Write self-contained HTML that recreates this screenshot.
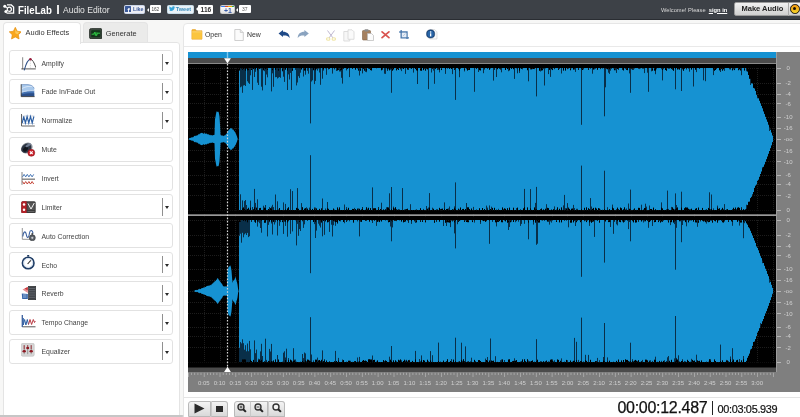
<!DOCTYPE html>
<html lang="en"><head><meta charset="utf-8"><title>FileLab | Audio Editor</title>
<style>
*{box-sizing:border-box;margin:0;padding:0}
html,body{width:800px;height:417px;overflow:hidden}
body{background:#f7f7f6;font-family:"Liberation Sans",Arial,sans-serif;position:relative;color:#333}
.abs{position:absolute}
#hdr{left:0;top:0;width:800px;height:19.500px;background:#3d4147;border-bottom:1.200px solid #2a2d32}
#hdr .logo{left:17.5px;top:2.5px;font-size:11.3px;font-weight:bold;color:#fff;line-height:14px;transform:scaleX(.855);transform-origin:0 0}
#hdr .sep{left:57.2px;top:5px;width:1.4px;height:9px;background:#e8e8e8}
#hdr .ttl{left:63px;top:3.5px;font-size:8.55px;color:#e6e6e6;line-height:12px}
.soc{top:4.5px;height:9.2px;border-radius:1.5px;font-size:6px;line-height:9px;font-weight:bold;text-align:center;white-space:nowrap}
.cnt{background:#fff;color:#555;border-radius:1px}
.st{line-height:9px;white-space:nowrap}
.cnt:before{content:"";position:absolute;left:-2.5px;top:2.5px;border:2px solid transparent;border-right-color:#fff;border-left:0}
#welcome{left:661px;top:5.5px;font-size:5.75px;color:#d9d9d9;line-height:9px;white-space:nowrap}
#welcome b{color:#fff;text-decoration:underline;margin-left:1.500px}
#make{left:733.5px;top:1.8px;width:67.5px;height:14.7px;border-radius:2px 0 0 2px;background:linear-gradient(#f1f1f1,#cfcfcf);border:1px solid #9a9a9a;font-size:7.5px;font-weight:bold;color:#222;line-height:12.5px;padding-left:7px;white-space:nowrap}
#make i{position:absolute;left:53px;top:0;width:1px;height:13px;background:#aaa}
#make u{position:absolute;left:55.500px;top:1.500px;width:9.600px;height:9.600px;border-radius:50%;background:linear-gradient(#f39a12,#f6d428);border:1.500px solid #171005}
#make u:after{content:"";position:absolute;left:1.800px;top:1.800px;width:3px;height:3px;border-radius:50%;background:#1a1208}
/* left panel */
#tab1{left:2.5px;top:22px;width:78px;height:22px;background:#fff;border:1px solid #e4e4e4;border-bottom:0;border-radius:4px 4px 0 0;z-index:2}
#tab2{left:82.5px;top:22px;width:65.5px;height:20.5px;background:#ebebea;border:1px solid #e4e4e4;border-bottom:0;border-radius:4px 4px 0 0}
.tabt{font-size:7.420px;color:#333;line-height:10px;white-space:nowrap}
#lp{left:2.5px;top:42px;width:177.5px;height:374px;background:#fff;border:1px solid #e4e4e4;border-radius:0 3px 0 0}
.fx{left:9px;width:163.8px;height:25.1px;border:1px solid #e2e2e2;border-radius:3px;background:#fff}
.fx span{position:absolute;left:31.500px;top:7.500px;font-size:6.860px;line-height:9px;color:#444;white-space:nowrap}
.fx i{position:absolute;left:151.900px;top:2.800px;width:1px;height:17.600px;background:#909090}
.fx u{position:absolute;left:154.900px;top:11px;border:2.900px solid transparent;border-top:3.400px solid #2a2a2a;border-bottom:0}
.fx svg{position:absolute;left:10px;top:5px}
/* right panel */
#rp{left:182.500px;top:23px;width:620px;height:400px;background:#fff;border:1px solid #e6e6e6;border-radius:4px 0 0 0}
#tbline{left:184px;top:45.600px;width:616px;height:1px;background:#e9e9e9}
.tbt{top:29.800px;font-size:6.9px;line-height:10px;color:#333}
#ctl{left:184px;top:396.600px;width:616px;height:1px;background:#e4e4e4}
.btn{top:400.500px;height:16.500px;background:linear-gradient(#f4f4f4,#d9d9d9);border:1px solid #b9b9b9}
#t1{-webkit-text-stroke:.25px #111;left:617.500px;top:398.200px;font-size:16px;line-height:20px;color:#111;white-space:nowrap;letter-spacing:-0.3px}
#t2{-webkit-text-stroke:.2px #111;left:717.400px;top:402.800px;font-size:10.9px;line-height:13px;color:#111;white-space:nowrap;letter-spacing:-0.3px}
#tsep{left:711.900px;top:400.800px;width:1.500px;height:14.200px;background:#222}
#wrap{position:absolute;left:0;top:0;width:800px;height:417px;overflow:hidden;will-change:transform}
</style></head><body><div id="wrap">
<div id="hdr" class="abs">
 <svg class="abs" style="left:3px;top:4px" width="11.500" height="10" viewBox="0 0 11.500 10"><g fill="none" stroke="#fff"><path d="M4 .900H8.300L10.600 3V9.200H3.500" stroke-width="1.300"/><circle cx="6.300" cy="5.200" r="2.100" stroke-width="1.200"/><path d="M1.700 2.300L4.600 4.200M2.800 7.400L4.600 6.300" stroke-width=".9"/></g><circle cx="1.800" cy="2.300" r="1.550" fill="#fff"/><circle cx="2.900" cy="7.500" r="1.550" fill="#fff"/></svg>
 <div class="abs logo">FileLab</div><div class="abs sep"></div><div class="abs ttl">Audio Editor</div>
 <div class="abs soc" style="left:124px;width:21px;background:#eceef5;border:0.5px solid #cad4e7"></div>
 <div class="abs" style="left:125.3px;top:6px;width:5.7px;height:6.4px;background:#3b5998;border-radius:.5px"></div>
 <div class="abs st" style="left:127.6px;top:6.2px;font-size:6.6px;color:#fff;font-weight:bold">f</div>
 <div class="abs st" style="left:132.9px;top:5px;font-size:5.3px;color:#3b5998;font-weight:bold">Like</div>
 <div class="abs soc cnt" style="left:149.5px;width:11px;top:5.2px;height:8px"></div>
 <div class="abs st" style="left:151.4px;top:5px;font-size:4.7px;color:#444">162</div>
 <div class="abs soc" style="left:167px;width:26.6px;background:#e9f2f8;border:0.5px solid #c8dce8"></div>
 <svg class="abs" style="left:168.8px;top:6.2px" width="6.4" height="5.4" viewBox="0 0 6 5"><path d="M0 4.2C2.500 5.500 5.300 4 5.200 1.300L6 .500 5.100.700C4.400-.300 2.900.200 3 1.600 1.800 1.500 1 1 .400.300.100 1 .300 1.700.800 2.100L.200 2c0 .700.500 1.200 1.100 1.400L.800 3.500c.200.500.700.800 1.200.800C1.400 4.300.700 4.300 0 4.200z" fill="#35a3d8"/></svg>
 <div class="abs st" style="left:175.8px;top:5px;font-size:5.55px;color:#3b8dbd;font-weight:bold">Tweet</div>
 <div class="abs soc cnt" style="left:198.2px;width:15.2px;top:4.6px;height:9px"></div>
 <div class="abs st" style="left:200.6px;top:5px;font-size:6.6px;color:#333;font-weight:bold">116</div>
 <div class="abs soc" style="left:220.4px;width:14.5px;background:linear-gradient(#fff,#e2e2e2);border:0.5px solid #ccc;overflow:hidden"><span class="abs" style="left:0;top:0;width:14px;height:1.600px;background:linear-gradient(90deg,#3a7cec 25%,#d9452f 25% 50%,#f4b400 50% 75%,#2ba14b 75%)"></span></div>
 <div class="abs st" style="left:223.900px;top:5.600px;font-size:6.900px;color:#3b5ea8;font-weight:bold">+1</div>
 <div class="abs soc cnt" style="left:238.800px;width:12.600px;top:5.200px;height:8px"></div>
 <div class="abs st" style="left:241.900px;top:5px;font-size:5px;color:#555">37</div>
 <div id="welcome" class="abs">Welcome! Please <b>sign in</b></div>
 <div id="make" class="abs">Make Audio<i></i><u></u></div>
</div>

<div id="tab1" class="abs"></div><div id="tab2" class="abs"></div>
<div id="lp" class="abs"></div>
<svg class="abs" style="left:8.700px;top:27.200px;z-index:3" width="12.600" height="12.600" viewBox="0 0 12 12"><path d="M6 .3l1.800 3.700 4 .6-2.900 2.800.7 4L6 9.500l-3.600 1.900.7-4L.2 4.600l4-.6z" fill="#f9a61c" stroke="#e28a09" stroke-width=".6"/><path d="M6 1.800l1.200 2.600 2.800.4-2 2L6 6z" fill="#fdd26a" opacity=".8"/></svg>
<div class="abs tabt" style="left:25.600px;top:28.200px;z-index:3">Audio Effects</div>
<svg class="abs" style="left:88.700px;top:27.800px" width="13.600" height="11.400" viewBox="0 0 13.600 11.400"><rect x=".4" y=".4" width="12.800" height="10.600" rx="2.200" fill="#3b473d" stroke="#232b25" stroke-width=".8"/><rect x="2.200" y="2.200" width="9.200" height="7" rx="1" fill="#12351a"/><path d="M2.600 6.200h2.200l1-2 1.300 3.600 1.200-2.600h2.700" stroke="#35d84a" stroke-width=".9" fill="none"/><ellipse cx="6.800" cy="5.700" rx="2.500" ry="2" fill="#2bbf3f" opacity=".45"/></svg>
<div class="abs tabt" style="left:105.700px;top:28.700px">Generate</div>
<div class="abs fx" style="top:50.00px"><svg style="left:10.5px;top:5.5px" width="15.500" height="14" viewBox="0 0 15.500 14"><path d="M9.400 2.500v9" stroke="#c9c9c9" stroke-width=".7" stroke-dasharray="1,.8"/><path d="M1.600.300V12.300" stroke="#9a9a9a" stroke-width="1.200"/><path d="M.300 11.900H14.800" stroke="#444" stroke-width=".9"/><path d="M3.200 13.300Q6.300 2.300 9.400 2.300" stroke="#2d4f86" stroke-width="1.100" fill="none"/><path d="M9.400 2.300Q12.150 2.300 14.900 10.700" stroke="#4a4a4a" stroke-width="1" fill="none"/><circle cx="9.400" cy="2.300" r="1.300" fill="#9b1c3c"/></svg><span>Amplify</span><i></i><u></u></div>
<div class="abs fx" style="top:78.87px"><svg style="left:10.4px;top:4.6px" width="15" height="13.500" viewBox="0 0 15 13.500"><path d="M1.200.600H8C11.500 1 13.500 2.500 14.200 4.500V12.300H1.200z" fill="#a9c9ec"/><path d="M1.200 8.500C5 7 10 6.500 14.200 6.800V12.300H1.200z" fill="#4573b3"/><path d="M1.200 10.500C5 9.300 10 9 14.200 9.200V12.300H1.200z" fill="#2b4f8a"/><path d="M1.200 5C5 2.500 9 2 13 2.600M1.200 8.500C5 7 10 6.500 14.200 6.800" stroke="#e8f1fb" stroke-width=".7" fill="none"/><path d="M1.200.600H8C11.500 1 13.500 2.500 14.200 4.500" stroke="#5a7fb5" stroke-width=".6" fill="none"/><path d="M1.200.300V12.600H14.600" stroke="#3a3a3a" stroke-width=".9" fill="none"/></svg><span>Fade In/Fade Out</span><i></i><u></u></div>
<div class="abs fx" style="top:107.74px"><svg style="left:10.4px;top:5.2px" width="15" height="13" viewBox="0 0 15 13"><path d="M1.500 2H14.500M1.500 9.500H14.500" stroke="#b9c4d4" stroke-width=".7"/><path d="M2.200 9L3.700 2.500 5.400 9 7.100 2.500 8.800 9 10.500 2.500 12.200 9 13.900 2.500" stroke="#2d5fa3" stroke-width="1.150" fill="none"/><path d="M1.500 0V12H14.800" stroke="#555" stroke-width=".9" fill="none"/></svg><span>Normalize</span><i></i><u></u></div>
<div class="abs fx" style="top:136.61px"><svg style="left:10.3px;top:4.0px" width="16" height="15" viewBox="0 0 16 15"><ellipse cx="6.800" cy="6" rx="6.200" ry="5" fill="#8e949c" transform="rotate(-38 6.800 6)"/><ellipse cx="6.300" cy="6.300" rx="5.400" ry="4.200" fill="#2c3442" transform="rotate(-38 6.300 6.300)"/><ellipse cx="5.500" cy="7.200" rx="2.800" ry="2" fill="#11151c" transform="rotate(-38 5.500 7.200)"/><ellipse cx="8.200" cy="3.200" rx="3" ry="1.200" fill="#6f7c92" transform="rotate(-30 8.200 3.200)"/><circle cx="11.300" cy="10.800" r="3.500" fill="#c9202a" stroke="#7e1016" stroke-width=".5"/><path d="M9.900 9.400l2.800 2.800M12.700 9.400l-2.800 2.800" stroke="#fff" stroke-width="1.200"/></svg><span>Mute</span></div>
<div class="abs fx" style="top:165.48px"><svg style="left:10.9px;top:5.2px" width="14.500" height="13" viewBox="0 0 14.500 12" preserveAspectRatio="none"><path d="M1 6.600H14" stroke="#444" stroke-width=".9"/><path d="M1 0V11.800" stroke="#777" stroke-width=".9"/><path d="M1.500 4.500l1.600-2.300 1.600 2.300 1.600-2.300 1.600 2.300 1.600-2.300 1.600 2.300 1.600-2.300" stroke="#3a6db0" stroke-width=".9" fill="none"/><path d="M1.500 8.800l1.600 2.300 1.600-2.300 1.600 2.300 1.600-2.300 1.600 2.300 1.600-2.300 1.600 2.300" stroke="#c0392b" stroke-width=".9" fill="none"/></svg><span>Invert</span></div>
<div class="abs fx" style="top:194.35px"><svg style="left:10.6px;top:5.2px" width="15" height="12.500" viewBox="0 0 15 12.500"><rect x=".3" y=".3" width="14.400" height="11.900" rx="1.500" fill="#3b3b3b"/><path d="M1.800.300H5.600V12.200H1.800Q.300 12.200.300 10.700V1.800Q.300.300 1.800.300z" fill="#b32128"/><circle cx="3" cy="3.600" r="1.250" fill="#fff"/><circle cx="3" cy="8.800" r="1.250" fill="#fff"/><rect x="6.500" y="1.500" width="7.200" height="7.500" fill="#555"/><path d="M7 2.500l3 5.500 3.300-6" stroke="#f2f2f2" stroke-width="1" fill="none"/><path d="M6.500 10.500h7" stroke="#777" stroke-width=".7"/></svg><span>Limiter</span><i></i><u></u></div>
<div class="abs fx" style="top:223.22px"><svg style="left:10.7px;top:3.8px" width="15.500" height="13" viewBox="0 0 15.500 13"><path d="M1.300 0V11.300H10" stroke="#8a8a8a" stroke-width=".9" fill="none"/><path d="M1.800 8.500C2.500 3 4.500 2.500 5.300 6.500S7.500 11 8.500 5C9 1.500 11.500 1.500 12 5.500" stroke="#3a5f9e" stroke-width="1.100" fill="none"/><circle cx="11.300" cy="9.800" r="3" fill="#5a5f66" stroke="#33363b" stroke-width=".6"/><circle cx="11.300" cy="9.800" r="1.100" fill="#c9ccd1"/><rect x="10.500" y="5" width="1.600" height="2.600" fill="#4a4d52"/></svg><span>Auto Correction</span></div>
<div class="abs fx" style="top:252.09px"><svg style="left:10.6px;top:2.0px" width="14.500" height="15" viewBox="0 0 14.500 15"><rect x="6.200" y="0" width="2" height="1.600" fill="#1f3a5f"/><circle cx="7.200" cy="8" r="5.800" fill="#fff" stroke="#1f3d66" stroke-width="1.600"/><circle cx="7.200" cy="8" r="4.400" fill="none" stroke="#b7c9e0" stroke-width=".6"/><path d="M6.600 9L9.800 5.300" stroke="#333" stroke-width="1.100"/></svg><span>Echo</span><i></i><u></u></div>
<div class="abs fx" style="top:280.96px"><svg style="left:10.6px;top:3.8px" width="15" height="14" viewBox="0 0 15 14"><rect x="7.500" y=".3" width="7.200" height="13.400" fill="#3f4247" stroke="#26282b" stroke-width=".6"/><path d="M8 2.500h6.200M8 4.700h6.200M8 6.900h6.200M8 9.100h6.200M8 11.300h6.200" stroke="#6d7178" stroke-width=".7"/><path d="M6.800 1L1.500 3.500 6.800 7z" fill="#e58b8f"/><path d="M6.800 1L3.500 2.500 6.800 4.500z" fill="#c9363c"/><path d="M.800 7.500L6.800 8 6.800 13 1.200 13z" fill="#3565a8"/><path d="M2 9h3.500M2 11h3.500" stroke="#cfe0f5" stroke-width=".7"/></svg><span>Reverb</span><i></i><u></u></div>
<div class="abs fx" style="top:309.83px"><svg style="left:10.5px;top:4.0px" width="15" height="13" viewBox="0 0 15 13"><path d="M1.300 11.800H14.500" stroke="#444" stroke-width=".9"/><path d="M1.300 0V12" stroke="#3a5f9e" stroke-width="1.300"/><path d="M2.300 3V10L3.600 4.500 4.900 10 6.300 4.500 7.500 9.500" stroke="#2d5fa3" stroke-width="1" fill="none"/><path d="M7.500 9.500L9 4.500 10.600 9.500 12.300 4.500 13.500 7.500 14.300 6" stroke="#b5303a" stroke-width=".95" fill="none"/></svg><span>Tempo Change</span><i></i><u></u></div>
<div class="abs fx" style="top:338.70px"><svg style="left:11.2px;top:3.8px" width="13.500" height="13.500" viewBox="0 0 13.500 13.500"><rect x=".3" y=".3" width="12.900" height="12.900" rx="1.500" fill="#d6d6d6" stroke="#bcbcbc" stroke-width=".6"/><path d="M3.200 2.200v9M6.700 2.200v9M10.200 2.200v9" stroke="#7a7a7a" stroke-width=".7"/><path d="M3.200 2.200v4M6.700 2.200v1.500M10.200 2.200v4" stroke="#a3222b" stroke-width=".8"/><ellipse cx="3.200" cy="8.300" rx="1.700" ry="1.300" fill="#8e1620"/><ellipse cx="6.700" cy="5" rx="1.500" ry="1.200" fill="#8e1620"/><ellipse cx="10.200" cy="8.300" rx="1.700" ry="1.300" fill="#8e1620"/></svg><span>Equalizer</span><i></i><u></u></div>

<div id="rp" class="abs"></div><div id="tbline" class="abs"></div>

<svg class="abs" style="left:190.800px;top:29.200px" width="12.300" height="10.600" viewBox="0 0 13 12"><path d="M.5 1.500Q.5.500 1.500.500h3l1.200 1.500H12v9.500H.5z" fill="#f6b731" stroke="#e0991a" stroke-width=".6"/><path d="M.8 3.200h11v8H.8z" fill="#fbc53f"/><path d="M.8 3.200h11" stroke="#fde39a" stroke-width=".7"/></svg>
<div class="abs tbt" style="left:205px">Open</div>
<svg class="abs" style="left:233.500px;top:29px" width="10" height="12" viewBox="0 0 10 12"><path d="M.8.500h5.500l3 3V11.500H.8z" fill="#fbfbfb" stroke="#c4c4c4" stroke-width=".8"/><path d="M6.300.500v3h3" fill="#e9e9e9" stroke="#c4c4c4" stroke-width=".7"/></svg>
<div class="abs tbt" style="left:247px">New</div>
<svg class="abs" style="left:278.300px;top:30.300px" width="12.400" height="8.200" viewBox="0 0 13 9"><path d="M.3 3.800L5.200 0v1.800c4.500 0 7.300 2.400 7.300 7.200C11 6.300 8.700 5.800 5.200 6v1.800z" fill="#1f4a88"/></svg>
<svg class="abs" style="left:296.600px;top:30.300px" width="12.400" height="8.200" viewBox="0 0 13 9"><path d="M12.700 3.800L7.800 0v1.800C3.300 1.800.5 4.200.5 9 2 6.300 4.300 5.800 7.800 6v1.800z" fill="#8aa3bf"/></svg>
<svg class="abs" style="left:325.500px;top:29.500px" width="10" height="11" viewBox="0 0 10 11"><path d="M1.500.5L7 8M8.500.5L3 8" stroke="#b9b0cc" stroke-width=".9" fill="none"/><ellipse cx="2.200" cy="9" rx="1.700" ry="1.300" fill="none" stroke="#f0e6a8" stroke-width="1.100"/><ellipse cx="7.800" cy="9" rx="1.700" ry="1.300" fill="none" stroke="#f0e6a8" stroke-width="1.100"/></svg>
<svg class="abs" style="left:343px;top:28.500px" width="12" height="13" viewBox="0 0 12 13"><path d="M.8 2.500h4l2 2v7.500h-6z" fill="#f7f7f7" stroke="#d6d6d6" stroke-width=".8"/><path d="M5 .800h4l2 2v7.500H5z" fill="#fafafa" stroke="#d6d6d6" stroke-width=".8"/></svg>
<svg class="abs" style="left:361.500px;top:29px" width="12" height="12" viewBox="0 0 12 12"><rect x=".5" y="1.500" width="8" height="9.500" rx=".8" fill="#a5805f" stroke="#7e5f45" stroke-width=".6"/><rect x="2.500" y=".3" width="4" height="2.200" rx=".6" fill="#8b8b8b"/><path d="M5.500 4.500h4l2 2v5h-6z" fill="#fbfbfb" stroke="#b9b9b9" stroke-width=".7"/></svg>
<svg class="abs" style="left:381.300px;top:31.400px" width="9" height="7.600" viewBox="0 0 10 8"><path d="M1.200.800l7.600 6.400M8.800.800L1.200 7.200" stroke="#d9534f" stroke-width="1.900" stroke-linecap="round"/></svg>
<svg class="abs" style="left:398.700px;top:29.600px" width="10.200" height="9.800" viewBox="0 0 11 11"><path d="M2.200 0v8.800H11M0 2.200h8.800V11" stroke="#4b79ad" stroke-width="1.500" fill="none"/><rect x="3.200" y="3.200" width="4.600" height="4.600" fill="#e6edf6"/><path d="M4 7l3-3" stroke="#8fa9cb" stroke-width=".6"/></svg>
<svg class="abs" style="left:426.200px;top:29.200px" width="11.500" height="10.500" viewBox="0 0 12 11"><path d="M4 .500h5l2.500 2.500v7.500H4z" fill="#fafafa" stroke="#d0d0d0" stroke-width=".7"/><circle cx="4.800" cy="5.200" r="4.300" fill="#184a84" stroke="#0f2f57" stroke-width=".5"/><circle cx="4.800" cy="5.200" r="3.300" fill="#2a66a8"/><rect x="4.200" y="4.500" width="1.300" height="3.200" fill="#fff"/><circle cx="4.850" cy="3.200" r=".8" fill="#fff"/></svg>

<svg width="612" height="340" viewBox="188 52 612 340" style="position:absolute;left:188px;top:52px;font-family:'Liberation Sans',sans-serif">
<rect x="188" y="52" width="588" height="6" fill="#1692d2"/>
<rect x="188" y="58" width="588" height="6" fill="#4b4b4b"/>
<rect x="188" y="63" width="588" height="1" fill="#8a8a8a"/>
<rect x="188" y="64" width="588" height="304" fill="#000"/>
<g stroke="#1d1d1d" stroke-width="1" stroke-dasharray="1,1"><line x1="188" x2="776" y1="68.5" y2="68.5"/><line x1="188" x2="776" y1="210.5" y2="210.5"/><line x1="188" x2="776" y1="83.5" y2="83.5"/><line x1="188" x2="776" y1="195.5" y2="195.5"/><line x1="188" x2="776" y1="94.5" y2="94.5"/><line x1="188" x2="776" y1="184.5" y2="184.5"/><line x1="188" x2="776" y1="103.5" y2="103.5"/><line x1="188" x2="776" y1="175.5" y2="175.5"/><line x1="188" x2="776" y1="117.5" y2="117.5"/><line x1="188" x2="776" y1="161.5" y2="161.5"/><line x1="188" x2="776" y1="128.5" y2="128.5"/><line x1="188" x2="776" y1="150.5" y2="150.5"/><line x1="188" x2="776" y1="139.5" y2="139.5"/><line x1="188" x2="776" y1="220.5" y2="220.5"/><line x1="188" x2="776" y1="362.5" y2="362.5"/><line x1="188" x2="776" y1="235.5" y2="235.5"/><line x1="188" x2="776" y1="347.5" y2="347.5"/><line x1="188" x2="776" y1="246.5" y2="246.5"/><line x1="188" x2="776" y1="336.5" y2="336.5"/><line x1="188" x2="776" y1="255.5" y2="255.5"/><line x1="188" x2="776" y1="327.5" y2="327.5"/><line x1="188" x2="776" y1="269.5" y2="269.5"/><line x1="188" x2="776" y1="313.5" y2="313.5"/><line x1="188" x2="776" y1="280.5" y2="280.5"/><line x1="188" x2="776" y1="302.5" y2="302.5"/><line x1="188" x2="776" y1="291.5" y2="291.5"/><line x1="204.5" x2="204.5" y1="64" y2="368"/><line x1="220.5" x2="220.5" y1="64" y2="368"/><line x1="235.5" x2="235.5" y1="64" y2="368"/><line x1="251.5" x2="251.5" y1="64" y2="368"/><line x1="267.5" x2="267.5" y1="64" y2="368"/><line x1="283.5" x2="283.5" y1="64" y2="368"/><line x1="299.5" x2="299.5" y1="64" y2="368"/><line x1="314.5" x2="314.5" y1="64" y2="368"/><line x1="330.5" x2="330.5" y1="64" y2="368"/><line x1="346.5" x2="346.5" y1="64" y2="368"/><line x1="362.5" x2="362.5" y1="64" y2="368"/><line x1="378.5" x2="378.5" y1="64" y2="368"/><line x1="394.5" x2="394.5" y1="64" y2="368"/><line x1="409.5" x2="409.5" y1="64" y2="368"/><line x1="425.5" x2="425.5" y1="64" y2="368"/><line x1="441.5" x2="441.5" y1="64" y2="368"/><line x1="457.5" x2="457.5" y1="64" y2="368"/><line x1="473.5" x2="473.5" y1="64" y2="368"/><line x1="488.5" x2="488.5" y1="64" y2="368"/><line x1="504.5" x2="504.5" y1="64" y2="368"/><line x1="520.5" x2="520.5" y1="64" y2="368"/><line x1="536.5" x2="536.5" y1="64" y2="368"/><line x1="552.5" x2="552.5" y1="64" y2="368"/><line x1="567.5" x2="567.5" y1="64" y2="368"/><line x1="583.5" x2="583.5" y1="64" y2="368"/><line x1="599.5" x2="599.5" y1="64" y2="368"/><line x1="615.5" x2="615.5" y1="64" y2="368"/><line x1="631.5" x2="631.5" y1="64" y2="368"/><line x1="647.5" x2="647.5" y1="64" y2="368"/><line x1="662.5" x2="662.5" y1="64" y2="368"/><line x1="678.5" x2="678.5" y1="64" y2="368"/><line x1="694.5" x2="694.5" y1="64" y2="368"/><line x1="710.5" x2="710.5" y1="64" y2="368"/><line x1="726.5" x2="726.5" y1="64" y2="368"/><line x1="741.5" x2="741.5" y1="64" y2="368"/><line x1="757.5" x2="757.5" y1="64" y2="368"/><line x1="773.5" x2="773.5" y1="64" y2="368"/></g>
<polygon fill="#1692d2" points="188.0,139.0 188.5,139.0 189.0,138.7 189.5,138.1 190.0,138.0 190.5,137.7 191.0,137.9 191.5,137.2 192.0,137.3 192.5,137.6 193.0,136.9 193.5,137.2 194.0,135.9 194.5,135.7 195.0,136.2 195.5,136.0 196.0,135.2 196.5,135.7 197.0,135.5 197.5,135.3 198.0,134.9 198.5,134.3 199.0,133.7 199.5,134.4 200.0,133.3 200.5,133.5 201.0,132.9 201.5,132.8 202.0,133.3 202.5,132.7 203.0,133.4 203.5,133.7 204.0,133.4 204.5,133.0 205.0,133.4 205.5,134.0 206.0,133.3 206.5,133.4 207.0,134.3 207.5,134.2 208.0,134.2 208.5,134.1 209.0,135.2 209.5,134.9 210.0,134.6 210.5,135.2 211.0,135.2 211.5,135.1 212.0,135.4 212.5,135.5 213.0,135.1 213.5,135.1 214.0,135.3 214.5,134.6 215.0,119.2 215.5,116.7 216.0,114.0 216.5,111.6 217.0,111.5 217.5,111.8 218.0,112.3 218.5,111.6 219.0,113.8 219.5,116.4 220.0,124.5 220.5,135.0 221.0,135.2 221.5,135.2 222.0,135.9 222.5,135.4 223.0,135.3 223.5,136.3 224.0,135.7 224.5,135.3 225.0,135.5 225.5,135.0 226.0,133.9 226.5,133.8 227.0,133.2 227.5,132.1 228.0,131.2 228.5,130.3 229.0,129.8 229.5,129.3 230.0,128.9 230.5,128.0 231.0,128.3 231.5,128.3 232.0,128.5 232.5,129.5 233.0,129.7 233.5,129.5 234.0,130.9 234.5,131.3 235.0,132.3 235.5,133.0 236.0,134.0 236.5,135.3 237.0,136.5 237.5,138.6 238.0,139.0 238.5,139.0 238.5,139.0 238.0,139.0 237.5,139.4 237.0,141.5 236.5,142.7 236.0,144.0 235.5,145.0 235.0,145.7 234.5,146.7 234.0,147.1 233.5,148.5 233.0,148.3 232.5,148.5 232.0,149.5 231.5,149.7 231.0,149.7 230.5,150.0 230.0,149.1 229.5,148.7 229.0,148.2 228.5,147.7 228.0,146.8 227.5,145.9 227.0,144.8 226.5,144.2 226.0,144.1 225.5,143.0 225.0,142.5 224.5,142.7 224.0,142.3 223.5,141.7 223.0,142.7 222.5,142.6 222.0,142.1 221.5,142.8 221.0,142.8 220.5,143.0 220.0,153.5 219.5,161.6 219.0,164.2 218.5,166.4 218.0,165.7 217.5,166.2 217.0,166.5 216.5,166.4 216.0,164.0 215.5,161.3 215.0,158.8 214.5,143.4 214.0,142.7 213.5,142.9 213.0,142.9 212.5,142.5 212.0,142.6 211.5,142.9 211.0,142.8 210.5,142.8 210.0,143.4 209.5,143.1 209.0,142.8 208.5,143.9 208.0,143.8 207.5,143.8 207.0,143.7 206.5,144.6 206.0,144.7 205.5,144.0 205.0,144.6 204.5,145.0 204.0,144.6 203.5,144.3 203.0,144.6 202.5,145.3 202.0,144.7 201.5,145.2 201.0,145.1 200.5,144.5 200.0,144.7 199.5,143.6 199.0,144.3 198.5,143.7 198.0,143.1 197.5,142.7 197.0,142.5 196.5,142.3 196.0,142.8 195.5,142.0 195.0,141.8 194.5,142.3 194.0,142.1 193.5,140.8 193.0,141.1 192.5,140.4 192.0,140.7 191.5,140.8 191.0,140.1 190.5,140.3 190.0,140.0 189.5,139.9 189.0,139.3 188.5,139.0 188.0,139.0"/>
<path stroke="#092f49" stroke-width="1" fill="none" d="M240.5 68.1V210.0M241.5 68.5V210.0M242.5 69.7V208.4M243.5 69.0V207.3M244.5 68.4V208.9M245.5 70.7V210.0M246.5 68.8V210.0M247.5 70.4V208.9M248.5 70.2V207.7M249.5 68.0V209.6M250.5 68.0V207.7M252.5 68.0V210.0M254.5 68.0V207.3M255.5 69.1V210.0M257.5 70.3V210.0M258.5 68.4V210.0M261.5 68.0V210.0M262.5 68.0V210.0M263.5 70.4V209.7M264.5 68.0V207.5M265.5 69.1V208.1M266.5 69.0V210.0M267.5 69.9V210.0M269.5 68.0V210.0M271.5 68.0V208.5M272.5 70.2V210.0M273.5 68.1V210.0M275.5 70.0V210.0M276.5 68.0V210.0M277.5 68.0V210.0M278.5 70.7V209.5M279.5 68.0V208.0M280.5 69.1V210.0M282.5 70.7V210.0M283.5 68.8V210.0M284.5 68.0V210.0M285.5 69.8V209.4M287.5 70.6V208.3M288.5 68.0V207.2M289.5 68.0V210.0M290.5 68.0V210.0M291.5 68.0V210.0M292.5 70.7V210.0M295.5 68.0V210.0M296.5 68.0V207.8M297.5 68.0V208.4M298.5 68.0V208.7M299.5 68.6V210.0M300.5 68.1V210.0M301.5 69.0V210.0M303.5 68.0V210.0M305.5 70.5V208.1M306.5 68.0V210.0M307.5 68.0V208.5M308.5 68.0V210.0M309.5 68.0V210.0M310.5 68.7V209.3M311.5 68.0V210.0M312.5 68.0V208.9M313.5 70.3V210.0M314.5 68.0V207.5M315.5 70.3V210.0M317.5 68.0V210.0M319.5 68.0V208.8M320.5 68.0V210.0M322.5 68.0V210.0M323.5 69.2V210.0M325.5 68.4V210.0M326.5 68.0V209.9M327.5 68.0V208.2M332.5 68.3V210.0M336.5 68.0V210.0M338.5 69.9V210.0M339.5 68.0V207.3M340.5 70.2V210.0M341.5 69.9V210.0M342.5 69.1V210.0M343.5 68.5V210.0M344.5 68.0V210.0M346.5 68.0V209.2M347.5 68.9V209.6M349.5 68.0V210.0M354.5 68.0V210.0M358.5 70.7V210.0M359.5 68.0V208.7M361.5 68.0V210.0M362.5 68.0V207.2M365.5 68.0V209.7M366.5 70.6V207.2M367.5 68.0V210.0M368.5 68.0V207.7M372.5 68.0V210.0M378.5 68.0V207.2M381.5 70.4V210.0M384.5 68.0V210.0M385.5 68.0V209.2M386.5 68.3V210.0M387.5 69.4V207.2M388.5 68.0V207.4M389.5 70.5V209.3M391.5 68.7V209.3M393.5 69.3V207.8M394.5 68.0V209.5M397.5 69.1V209.8M398.5 70.0V209.5M401.5 68.0V210.0M402.5 68.4V210.0M405.5 68.0V210.0M410.5 68.3V210.0M413.5 68.0V210.0M417.5 70.7V210.0M423.5 70.2V210.0M425.5 70.8V210.0M426.5 68.8V209.7M428.5 68.7V210.0M429.5 68.0V207.6M431.5 68.0V210.0M432.5 69.0V210.0M433.5 68.0V208.7M434.5 68.0V210.0M436.5 68.0V210.0M437.5 68.0V209.4M439.5 69.9V207.8M441.5 70.1V208.8M444.5 68.0V208.9M445.5 68.8V210.0M446.5 68.0V209.0M447.5 68.0V208.8M448.5 68.0V210.0M449.5 68.9V210.0M452.5 68.0V209.2M454.5 69.9V208.2M455.5 68.7V209.3M459.5 70.7V209.6M460.5 68.8V207.4M464.5 69.9V210.0M466.5 68.0V210.0M473.5 68.0V209.9M474.5 68.2V210.0M478.5 68.9V210.0M483.5 68.0V210.0M486.5 68.0V210.0M487.5 68.7V209.6M489.5 69.8V210.0M491.5 68.0V210.0M493.5 68.0V210.0M496.5 68.0V209.6M498.5 68.0V210.0M501.5 68.0V210.0M508.5 68.3V210.0M514.5 68.0V210.0M516.5 68.4V210.0M517.5 68.2V207.5M519.5 70.7V210.0M520.5 68.3V210.0M522.5 68.0V210.0M524.5 68.0V207.2M527.5 70.3V207.3M528.5 68.0V210.0M530.5 69.4V208.3M535.5 68.0V209.5M536.5 68.7V209.3M540.5 68.0V209.2M544.5 68.0V210.0M546.5 68.0V209.7M548.5 68.0V208.1M550.5 68.0V210.0M554.5 69.2V209.8M559.5 68.0V208.7M561.5 68.0V207.3M563.5 70.7V210.0M564.5 68.0V210.0M565.5 70.7V210.0M567.5 69.2V210.0M568.5 68.6V208.2M572.5 68.0V208.4M573.5 69.7V209.7M574.5 69.5V210.0M575.5 68.0V210.0M576.5 68.0V210.0M577.5 68.0V210.0M581.5 68.7V209.3M583.5 68.2V210.0M590.5 68.0V210.0M591.5 68.0V210.0M592.5 68.0V208.8M594.5 68.0V210.0M604.5 68.7V209.3M605.5 68.0V210.0M607.5 69.4V210.0M608.5 68.9V210.0M609.5 69.2V209.1M610.5 68.0V210.0M612.5 68.0V207.5M614.5 70.3V210.0M615.5 68.3V210.0M616.5 68.0V210.0M618.5 69.7V209.5M625.5 68.0V209.5M626.5 69.9V210.0M628.5 68.0V210.0M629.5 68.0V208.7M630.5 68.7V209.3M633.5 68.0V209.5M639.5 68.0V207.9M641.5 68.0V210.0M644.5 68.0V208.0M645.5 68.0V208.1M646.5 68.0V210.0M647.5 68.9V210.0M648.5 68.0V210.0M649.5 68.0V210.0M651.5 68.0V209.0M655.5 70.6V209.2M656.5 68.0V210.0M661.5 68.0V207.6M662.5 70.2V208.2M663.5 68.0V210.0M666.5 70.8V209.4M667.5 68.2V209.1M668.5 68.7V210.0M671.5 68.9V210.0M675.5 68.7V209.3M676.5 68.0V208.2M677.5 69.6V207.3M681.5 68.0V207.6M686.5 69.4V208.0M688.5 68.0V208.7M689.5 68.0V209.4M691.5 69.7V208.6M693.5 68.0V210.0M696.5 68.0V208.1M699.5 68.0V210.0M702.5 68.0V207.9M703.5 68.2V210.0M705.5 68.0V209.8M708.5 68.0V207.9M709.5 68.0V208.9M711.5 68.0V208.9M713.5 69.6V210.0M717.5 68.0V207.6M720.5 69.8V210.0M724.5 68.0V210.0M729.5 68.0V210.0M732.5 70.5V210.0M733.5 68.0V207.7M738.5 70.3V207.2M741.5 68.0V207.3M746.5 69.2V208.8M750.5 78.8V198.1M756.5 94.5V184.4M757.5 97.1V180.8M761.5 105.9V171.5M762.5 108.4V168.4M763.5 111.5V167.0M764.5 113.8V164.4M768.5 124.2V153.7M769.5 127.4V151.0M772.5 135.6V142.4"/>
<path stroke="#1692d2" stroke-width="1" fill="none" d="M239.5 70.6V210.0M240.5 87.3V194.3M241.5 86.5V210.0M242.5 92.8V200.4M243.5 85.5V207.3M244.5 85.1V201.1M245.5 86.0V200.0M246.5 68.8V205.0M247.5 81.3V208.9M248.5 82.8V207.7M249.5 83.9V209.6M250.5 75.3V200.6M251.5 70.0V210.0M252.5 89.9V207.0M253.5 69.1V209.2M254.5 77.0V188.9M255.5 71.8V202.9M256.5 68.0V207.6M257.5 82.7V199.3M258.5 85.0V210.0M259.5 68.9V208.1M260.5 68.6V207.9M261.5 86.7V210.0M262.5 90.4V210.0M263.5 70.4V205.7M264.5 71.2V207.5M265.5 85.1V205.0M266.5 74.5V210.0M267.5 77.3V210.0M268.5 68.0V209.0M269.5 68.0V207.1M270.5 68.0V208.1M271.5 91.4V206.6M272.5 73.3V204.8M273.5 86.8V207.1M274.5 68.0V210.0M275.5 77.2V194.5M276.5 77.0V210.0M277.5 78.5V201.3M278.5 77.7V209.5M279.5 77.0V208.0M280.5 77.8V210.0M281.5 68.0V210.0M282.5 71.4V210.0M283.5 76.7V202.4M284.5 81.9V210.0M285.5 69.8V203.9M286.5 68.0V210.0M287.5 90.0V208.3M288.5 74.4V207.2M289.5 79.5V210.0M290.5 72.9V189.2M291.5 90.0V210.0M292.5 70.9V191.1M293.5 68.0V210.0M294.5 68.0V210.0M295.5 69.9V210.0M296.5 85.4V207.8M297.5 82.5V188.1M298.5 76.2V208.7M299.5 77.9V210.0M300.5 72.7V210.0M301.5 69.8V203.1M302.5 68.0V207.2M303.5 76.5V210.0M304.5 70.6V208.7M305.5 74.7V208.1M306.5 68.0V207.3M307.5 70.8V208.5M308.5 73.7V210.0M309.5 68.0V207.6M310.5 123.4V155.2M311.5 81.5V210.0M312.5 80.3V208.9M313.5 70.3V210.0M314.5 84.1V207.5M315.5 80.9V207.6M316.5 69.1V208.4M317.5 70.6V210.0M318.5 68.6V210.0M319.5 72.5V208.8M320.5 84.8V210.0M321.5 68.0V208.3M322.5 78.7V198.5M323.5 70.6V210.0M324.5 68.0V210.0M325.5 68.4V208.5M326.5 74.8V209.9M327.5 68.0V202.0M328.5 69.3V208.8M329.5 68.8V210.0M330.5 68.0V210.0M331.5 68.0V210.0M332.5 73.6V210.0M333.5 68.0V208.5M334.5 69.3V209.7M335.5 68.0V210.0M336.5 71.0V210.0M337.5 70.5V207.4M338.5 69.9V209.3M339.5 71.5V207.3M340.5 71.5V210.0M341.5 77.8V210.0M342.5 83.6V210.0M343.5 68.9V210.0M344.5 68.0V204.5M345.5 68.0V210.0M346.5 70.4V207.1M347.5 68.9V209.6M348.5 68.1V207.8M349.5 77.1V210.0M350.5 68.0V210.0M351.5 68.0V210.0M352.5 69.0V208.9M353.5 68.0V209.0M354.5 68.0V207.9M355.5 69.7V209.1M356.5 68.0V210.0M357.5 68.5V208.6M358.5 70.7V208.4M359.5 75.5V208.7M360.5 70.8V210.0M361.5 68.0V209.1M362.5 73.4V207.2M363.5 68.9V210.0M364.5 70.7V210.0M365.5 71.8V209.7M366.5 72.2V207.2M367.5 68.0V208.7M368.5 68.8V207.7M369.5 68.8V210.0M370.5 70.1V208.1M371.5 70.5V210.0M372.5 68.0V187.4M373.5 68.0V208.3M374.5 68.0V208.2M375.5 68.0V208.2M376.5 68.3V209.9M377.5 68.0V210.0M378.5 68.0V207.2M379.5 68.0V210.0M380.5 68.0V209.0M381.5 70.4V202.7M382.5 69.6V210.0M383.5 68.0V209.4M384.5 73.7V210.0M385.5 73.9V209.2M386.5 68.3V207.3M387.5 71.0V207.2M388.5 69.2V207.4M389.5 70.5V193.3M390.5 69.5V210.0M391.5 92.8V187.0M392.5 70.7V210.0M393.5 69.6V206.6M394.5 68.0V208.3M395.5 68.0V207.2M396.5 70.4V209.3M397.5 69.1V209.8M398.5 70.0V209.3M399.5 68.0V209.6M400.5 69.3V210.0M401.5 71.1V210.0M402.5 68.4V188.1M403.5 69.0V210.0M404.5 68.0V209.6M405.5 73.9V209.0M406.5 68.0V209.1M407.5 69.6V208.7M408.5 69.7V210.0M409.5 68.0V210.0M410.5 68.3V204.2M411.5 68.8V210.0M412.5 68.0V210.0M413.5 72.6V210.0M414.5 68.0V210.0M415.5 69.0V209.9M416.5 70.4V209.5M417.5 84.0V210.0M418.5 68.0V210.0M419.5 68.0V210.0M420.5 70.6V208.2M421.5 70.8V210.0M422.5 68.0V210.0M423.5 70.2V208.9M424.5 68.8V210.0M425.5 70.9V210.0M426.5 68.8V206.0M427.5 69.4V208.7M428.5 89.2V207.5M429.5 68.0V193.1M430.5 68.0V210.0M431.5 72.5V210.0M432.5 69.0V207.7M433.5 70.6V208.7M434.5 83.8V210.0M435.5 68.9V210.0M436.5 68.0V209.2M437.5 70.1V209.4M438.5 69.5V210.0M439.5 72.4V207.8M440.5 68.0V209.2M441.5 70.1V208.8M442.5 68.0V208.6M443.5 68.0V210.0M444.5 68.0V202.4M445.5 73.9V210.0M446.5 68.0V209.0M447.5 68.7V208.8M448.5 68.0V208.4M449.5 68.9V206.5M450.5 68.1V210.0M451.5 69.0V210.0M452.5 74.1V209.2M453.5 68.0V209.6M454.5 69.9V206.4M455.5 99.9V182.4M456.5 68.0V210.0M457.5 68.0V210.0M458.5 69.1V208.7M459.5 77.2V209.6M460.5 68.8V207.4M461.5 68.0V210.0M462.5 68.0V209.1M463.5 68.0V208.9M464.5 71.4V210.0M465.5 68.0V209.0M466.5 69.2V203.0M467.5 70.6V207.3M468.5 69.9V207.3M469.5 70.0V209.1M470.5 68.0V210.0M471.5 68.0V208.5M472.5 68.0V210.0M473.5 68.0V206.9M474.5 91.8V210.0M475.5 68.0V210.0M476.5 69.0V209.6M477.5 68.0V210.0M478.5 72.0V210.0M479.5 70.2V208.2M480.5 70.5V210.0M481.5 68.0V210.0M482.5 68.0V208.0M483.5 73.2V210.0M484.5 69.4V209.0M485.5 68.0V210.0M486.5 68.0V205.6M487.5 68.7V207.6M488.5 68.0V210.0M489.5 69.8V205.4M490.5 68.5V209.0M491.5 68.0V206.7M492.5 68.0V207.9M493.5 80.6V210.0M494.5 69.7V207.8M495.5 68.0V210.0M496.5 77.0V209.6M497.5 69.2V210.0M498.5 68.0V208.8M499.5 68.7V210.0M500.5 69.5V210.0M501.5 72.3V210.0M502.5 68.0V207.4M503.5 68.0V209.4M504.5 68.0V208.1M505.5 70.0V208.8M506.5 68.0V210.0M507.5 69.1V208.2M508.5 71.2V210.0M509.5 70.4V207.6M510.5 68.0V210.0M511.5 68.9V210.0M512.5 68.0V210.0M513.5 69.2V207.7M514.5 78.9V210.0M515.5 68.0V210.0M516.5 68.4V208.1M517.5 73.3V207.5M518.5 68.0V210.0M519.5 72.9V210.0M520.5 68.3V209.2M521.5 68.9V210.0M522.5 69.4V210.0M523.5 68.0V208.3M524.5 68.0V188.9M525.5 68.0V210.0M526.5 68.0V210.0M527.5 70.3V207.3M528.5 81.3V210.0M529.5 68.0V210.0M530.5 69.4V189.1M531.5 69.4V209.9M532.5 69.1V210.0M533.5 69.0V210.0M534.5 69.1V207.4M535.5 68.0V202.9M536.5 96.4V186.9M537.5 68.0V210.0M538.5 68.0V210.0M539.5 70.8V210.0M540.5 71.5V209.2M541.5 70.6V208.5M542.5 70.3V210.0M543.5 68.6V209.4M544.5 85.5V210.0M545.5 68.3V208.7M546.5 68.0V204.2M547.5 68.0V207.8M548.5 74.1V208.1M549.5 69.9V210.0M550.5 76.9V210.0M551.5 69.3V209.5M552.5 70.1V210.0M553.5 68.0V209.2M554.5 69.2V206.4M555.5 68.0V210.0M556.5 68.0V209.6M557.5 68.0V207.3M558.5 69.9V210.0M559.5 69.0V208.7M560.5 68.0V210.0M561.5 73.5V207.3M562.5 68.0V209.9M563.5 70.7V205.4M564.5 68.0V194.9M565.5 70.7V208.2M566.5 68.0V208.4M567.5 69.2V203.1M568.5 68.6V207.4M569.5 68.0V208.9M570.5 70.3V210.0M571.5 68.2V208.7M572.5 68.0V208.4M573.5 69.7V204.9M574.5 69.5V208.1M575.5 71.9V210.0M576.5 68.0V208.8M577.5 68.0V208.8M578.5 69.8V210.0M579.5 68.0V210.0M580.5 68.0V210.0M581.5 124.8V165.6M582.5 70.0V210.0M583.5 69.4V210.0M584.5 68.0V207.8M585.5 68.0V210.0M586.5 68.0V207.3M587.5 68.0V210.0M588.5 69.8V208.2M589.5 68.0V209.2M590.5 68.8V198.1M591.5 68.0V206.5M592.5 73.7V208.8M593.5 69.6V207.9M594.5 69.4V210.0M595.5 68.5V207.7M596.5 68.0V208.6M597.5 69.8V210.0M598.5 68.0V208.1M599.5 68.0V208.4M600.5 69.1V209.7M601.5 68.0V210.0M602.5 68.5V209.8M603.5 68.0V210.0M604.5 116.3V170.7M605.5 87.3V210.0M606.5 68.9V210.0M607.5 69.4V207.2M608.5 72.7V210.0M609.5 73.9V209.1M610.5 70.7V210.0M611.5 68.6V210.0M612.5 68.0V204.6M613.5 68.3V208.3M614.5 70.3V210.0M615.5 70.3V210.0M616.5 72.9V209.0M617.5 69.0V207.6M618.5 69.7V209.1M619.5 68.0V210.0M620.5 68.0V207.5M621.5 68.0V208.2M622.5 69.7V210.0M623.5 70.5V209.3M624.5 68.1V207.3M625.5 68.9V209.5M626.5 69.9V208.5M627.5 70.2V210.0M628.5 68.0V203.5M629.5 73.4V208.7M630.5 92.8V189.6M631.5 69.1V210.0M632.5 69.7V210.0M633.5 69.9V209.5M634.5 68.5V208.4M635.5 68.0V210.0M636.5 68.0V209.9M637.5 68.0V210.0M638.5 68.7V207.8M639.5 69.1V207.9M640.5 68.4V210.0M641.5 68.0V204.7M642.5 68.6V210.0M643.5 68.5V209.6M644.5 73.1V208.0M645.5 68.0V203.7M646.5 68.0V206.6M647.5 72.7V210.0M648.5 91.8V210.0M649.5 68.0V205.5M650.5 68.0V209.0M651.5 71.3V209.0M652.5 70.7V209.9M653.5 68.0V207.6M654.5 70.7V210.0M655.5 74.2V209.2M656.5 69.3V210.0M657.5 68.0V210.0M658.5 68.1V210.0M659.5 68.0V210.0M660.5 68.0V210.0M661.5 69.2V202.4M662.5 80.4V208.2M663.5 69.1V210.0M664.5 68.0V210.0M665.5 70.0V210.0M666.5 70.8V209.4M667.5 68.2V190.6M668.5 68.7V208.9M669.5 68.5V210.0M670.5 68.1V210.0M671.5 68.9V206.9M672.5 69.7V207.3M673.5 70.8V208.8M674.5 68.0V209.6M675.5 89.3V193.4M676.5 68.0V205.0M677.5 69.6V207.3M678.5 69.2V210.0M679.5 69.7V210.0M680.5 68.0V210.0M681.5 91.0V191.7M682.5 69.3V209.9M683.5 70.8V210.0M684.5 69.0V208.2M685.5 68.0V207.3M686.5 69.4V207.3M687.5 68.0V207.5M688.5 68.7V208.7M689.5 71.7V209.4M690.5 68.0V209.5M691.5 69.7V208.6M692.5 68.0V210.0M693.5 86.5V210.0M694.5 68.0V210.0M695.5 69.8V208.7M696.5 72.1V208.1M697.5 68.0V210.0M698.5 68.0V207.5M699.5 69.0V210.0M700.5 68.0V210.0M701.5 68.0V210.0M702.5 68.0V207.9M703.5 80.3V210.0M704.5 68.0V210.0M705.5 81.2V209.8M706.5 68.0V209.4M707.5 68.0V210.0M708.5 68.0V207.9M709.5 68.0V192.3M710.5 68.0V209.4M711.5 68.0V194.5M712.5 68.0V210.0M713.5 75.1V208.4M714.5 70.8V210.0M715.5 70.0V210.0M716.5 68.9V210.0M717.5 68.0V205.6M718.5 68.0V208.9M719.5 70.4V208.2M720.5 72.0V210.0M721.5 68.9V209.4M722.5 70.7V207.8M723.5 69.3V209.4M724.5 70.9V204.1M725.5 68.0V210.0M726.5 68.0V209.5M727.5 68.0V209.1M728.5 68.0V210.0M729.5 69.3V210.0M730.5 69.4V210.0M731.5 68.0V210.0M732.5 70.5V209.0M733.5 69.3V207.7M734.5 70.1V209.1M735.5 68.2V207.5M736.5 68.0V209.4M737.5 68.0V207.7M738.5 70.3V207.2M739.5 69.4V207.9M740.5 70.5V210.0M741.5 75.2V207.3M742.5 68.0V210.0M743.5 68.0V209.2M744.5 70.6V209.9M745.5 68.0V209.3M746.5 71.2V204.7M747.5 71.6V205.1M748.5 75.0V201.8M749.5 78.8V201.6M750.5 85.0V198.1M751.5 83.3V196.8M752.5 83.6V194.4M753.5 87.9V192.0M754.5 88.5V187.9M755.5 90.9V185.7M756.5 95.0V184.4M757.5 98.3V180.8M758.5 98.3V179.7M759.5 100.8V176.8M760.5 103.4V174.0M761.5 105.9V171.4M762.5 108.4V167.2M763.5 111.5V166.7M764.5 114.1V164.4M765.5 116.8V161.8M766.5 119.4V159.2M767.5 121.8V156.5M768.5 125.1V153.7M769.5 131.0V151.0M770.5 129.8V148.2M771.5 132.6V145.4M772.5 135.6V142.0"/>

<polygon fill="#1692d2" points="188.0,291.0 188.5,291.0 189.0,291.0 189.5,291.0 190.0,291.0 190.5,291.0 191.0,291.0 191.5,291.0 192.0,291.0 192.5,291.0 193.0,291.0 193.5,291.0 194.0,290.8 194.5,291.0 195.0,290.0 195.5,289.9 196.0,290.2 196.5,289.8 197.0,290.2 197.5,290.0 198.0,289.8 198.5,289.1 199.0,289.5 199.5,288.4 200.0,289.3 200.5,289.0 201.0,288.9 201.5,287.9 202.0,288.2 202.5,287.9 203.0,287.9 203.5,287.4 204.0,287.5 204.5,287.5 205.0,287.1 205.5,287.1 206.0,287.1 206.5,286.1 207.0,286.1 207.5,285.9 208.0,285.4 208.5,285.8 209.0,285.7 209.5,285.4 210.0,285.3 210.5,284.8 211.0,285.4 211.5,284.4 212.0,283.8 212.5,283.6 213.0,283.5 213.5,282.2 214.0,282.6 214.5,281.4 215.0,281.3 215.5,280.9 216.0,280.2 216.5,279.8 217.0,279.2 217.5,278.0 218.0,278.2 218.5,279.4 219.0,279.8 219.5,280.8 220.0,281.5 220.5,281.7 221.0,283.1 221.5,283.2 222.0,284.1 222.5,284.8 223.0,286.0 223.5,286.2 224.0,286.6 224.5,286.6 225.0,286.3 225.5,286.4 226.0,286.2 226.5,286.8 227.0,285.9 227.5,270.7 228.0,269.0 228.5,267.3 229.0,266.4 229.5,266.4 230.0,265.6 230.5,265.7 231.0,267.8 231.5,270.7 232.0,277.0 232.5,282.9 233.0,281.1 233.5,280.4 234.0,280.2 234.5,279.5 235.0,277.9 235.5,276.8 236.0,278.8 236.5,280.9 237.0,282.3 237.5,284.6 238.0,288.5 238.5,291.0 238.5,291.0 238.0,293.5 237.5,297.4 237.0,299.7 236.5,301.1 236.0,303.2 235.5,305.2 235.0,304.1 234.5,302.5 234.0,301.8 233.5,301.6 233.0,300.9 232.5,299.1 232.0,305.0 231.5,311.3 231.0,314.2 230.5,316.3 230.0,316.4 229.5,315.6 229.0,315.6 228.5,314.7 228.0,313.0 227.5,311.3 227.0,296.1 226.5,295.2 226.0,295.8 225.5,295.6 225.0,295.7 224.5,295.4 224.0,295.4 223.5,295.8 223.0,296.0 222.5,297.2 222.0,297.9 221.5,298.8 221.0,298.9 220.5,300.3 220.0,300.5 219.5,301.2 219.0,302.2 218.5,302.6 218.0,303.8 217.5,304.0 217.0,302.8 216.5,302.2 216.0,301.8 215.5,301.1 215.0,300.7 214.5,300.6 214.0,299.4 213.5,299.8 213.0,298.5 212.5,298.4 212.0,298.2 211.5,297.6 211.0,296.6 210.5,297.2 210.0,296.7 209.5,296.6 209.0,296.3 208.5,296.2 208.0,296.6 207.5,296.1 207.0,295.9 206.5,295.9 206.0,294.9 205.5,294.9 205.0,294.9 204.5,294.5 204.0,294.5 203.5,294.6 203.0,294.1 202.5,294.1 202.0,293.8 201.5,294.1 201.0,293.1 200.5,293.0 200.0,292.7 199.5,293.6 199.0,292.5 198.5,292.9 198.0,292.2 197.5,292.0 197.0,291.8 196.5,292.2 196.0,291.8 195.5,292.1 195.0,292.0 194.5,291.0 194.0,291.2 193.5,291.0 193.0,291.0 192.5,291.0 192.0,291.0 191.5,291.0 191.0,291.0 190.5,291.0 190.0,291.0 189.5,291.0 189.0,291.0 188.5,291.0 188.0,291.0"/>
<path stroke="#092f49" stroke-width="1" fill="none" d="M239.5 222.0V362.0M240.5 221.7V362.0M241.5 220.0V362.0M242.5 220.0V359.4M243.5 220.9V359.4M244.5 220.1V359.3M245.5 221.3V359.5M246.5 220.0V362.0M247.5 222.3V362.0M248.5 220.0V362.0M249.5 220.0V362.0M250.5 220.0V359.8M251.5 221.4V361.0M254.5 220.2V362.0M255.5 222.8V362.0M256.5 220.0V361.8M257.5 221.5V362.0M258.5 220.0V360.4M259.5 220.0V359.3M260.5 220.0V361.1M261.5 220.6V359.9M262.5 220.0V362.0M265.5 222.8V362.0M266.5 220.2V361.7M267.5 220.0V362.0M268.5 220.0V360.9M269.5 221.3V361.3M270.5 220.0V362.0M271.5 221.8V361.1M272.5 220.0V361.4M274.5 220.0V362.0M275.5 220.0V359.3M277.5 221.0V362.0M279.5 220.9V362.0M280.5 220.0V362.0M282.5 222.2V361.7M283.5 220.0V361.9M284.5 221.6V362.0M285.5 221.7V360.1M286.5 220.0V362.0M287.5 222.5V362.0M288.5 221.3V360.1M290.5 220.0V359.5M292.5 220.0V361.6M293.5 220.0V360.8M294.5 220.0V360.6M295.5 220.3V362.0M296.5 221.4V361.7M297.5 220.0V362.0M298.5 220.0V362.0M299.5 222.0V362.0M300.5 220.5V361.7M302.5 221.3V361.0M303.5 220.0V362.0M304.5 220.0V362.0M305.5 220.0V360.3M308.5 220.0V359.7M310.5 220.7V361.3M311.5 220.0V362.0M313.5 222.0V362.0M314.5 220.0V362.0M315.5 221.9V359.5M316.5 220.0V359.6M317.5 220.0V362.0M318.5 220.0V360.3M319.5 220.2V360.0M320.5 221.2V361.2M322.5 220.0V362.0M324.5 220.0V360.4M327.5 222.3V362.0M328.5 221.4V362.0M329.5 221.1V361.3M331.5 220.0V362.0M332.5 220.0V362.0M333.5 220.9V362.0M335.5 222.3V362.0M337.5 222.8V362.0M338.5 220.2V360.6M340.5 220.0V362.0M342.5 220.0V361.6M344.5 220.0V362.0M349.5 220.0V360.6M350.5 220.0V362.0M353.5 222.7V362.0M357.5 220.0V362.0M359.5 220.4V361.2M363.5 220.0V360.0M372.5 220.8V361.6M376.5 220.6V361.6M378.5 220.4V362.0M381.5 221.6V362.0M385.5 220.5V361.0M389.5 222.0V362.0M390.5 220.2V359.6M391.5 220.7V361.3M392.5 221.4V362.0M395.5 220.8V360.7M398.5 220.0V359.7M401.5 221.7V361.9M405.5 221.6V362.0M406.5 220.0V360.7M408.5 221.3V360.1M411.5 221.1V362.0M415.5 220.0V359.5M419.5 220.0V362.0M421.5 220.0V360.2M430.5 220.0V360.4M432.5 220.0V362.0M438.5 220.0V361.1M443.5 220.0V360.5M446.5 221.7V361.2M450.5 222.2V361.0M451.5 220.5V362.0M453.5 220.0V359.5M454.5 222.4V362.0M455.5 220.7V361.3M457.5 220.6V362.0M461.5 220.0V359.8M462.5 220.0V362.0M465.5 220.4V362.0M468.5 222.3V362.0M470.5 220.0V362.0M471.5 220.1V362.0M474.5 220.8V359.8M480.5 221.6V361.0M485.5 221.9V362.0M486.5 221.2V360.0M487.5 220.0V360.8M489.5 220.4V360.4M490.5 220.0V362.0M492.5 220.0V360.9M495.5 222.4V362.0M496.5 222.4V362.0M500.5 220.0V362.0M501.5 222.3V362.0M504.5 220.6V362.0M505.5 221.5V362.0M507.5 222.8V362.0M508.5 222.2V359.4M509.5 220.0V359.2M511.5 220.0V362.0M514.5 220.0V361.2M515.5 220.0V360.6M518.5 220.0V362.0M520.5 220.0V361.6M521.5 220.0V361.3M524.5 220.0V359.2M528.5 222.6V362.0M529.5 220.0V362.0M530.5 220.2V362.0M533.5 221.6V362.0M536.5 220.7V361.3M537.5 221.3V359.6M538.5 222.7V362.0M544.5 220.0V361.9M545.5 220.0V362.0M546.5 220.2V361.0M547.5 221.7V362.0M549.5 220.0V361.7M551.5 220.0V359.3M554.5 220.0V362.0M561.5 222.5V362.0M564.5 220.0V361.6M567.5 220.0V362.0M568.5 220.0V362.0M574.5 220.1V360.8M575.5 220.0V362.0M576.5 222.3V360.1M577.5 220.0V362.0M578.5 220.0V362.0M581.5 220.7V361.3M585.5 220.5V360.2M587.5 220.0V362.0M588.5 220.0V362.0M589.5 222.4V362.0M594.5 220.0V362.0M597.5 220.8V362.0M599.5 222.5V362.0M603.5 220.0V360.5M604.5 220.7V361.3M607.5 220.0V361.4M609.5 222.1V360.6M610.5 221.4V362.0M613.5 220.0V361.7M616.5 220.0V360.8M617.5 221.0V362.0M624.5 220.0V362.0M628.5 220.0V361.1M629.5 220.0V361.6M630.5 220.7V361.3M632.5 221.2V361.3M633.5 222.0V362.0M641.5 221.6V361.2M642.5 220.3V362.0M643.5 220.0V362.0M644.5 220.0V362.0M648.5 221.8V362.0M649.5 222.1V361.4M650.5 221.1V362.0M652.5 221.0V362.0M655.5 222.0V360.2M661.5 221.6V362.0M664.5 220.0V362.0M667.5 220.3V361.8M668.5 222.6V362.0M670.5 222.0V362.0M674.5 221.3V362.0M675.5 220.7V361.3M676.5 220.0V359.4M678.5 220.0V361.5M681.5 220.0V361.0M682.5 220.0V360.8M684.5 220.5V362.0M685.5 222.2V362.0M686.5 220.0V362.0M689.5 220.0V362.0M691.5 220.0V362.0M696.5 222.6V362.0M697.5 220.0V360.3M702.5 220.5V362.0M706.5 221.3V361.6M708.5 222.0V361.7M710.5 220.0V359.4M711.5 220.0V362.0M720.5 220.0V361.1M721.5 220.0V362.0M726.5 220.0V360.5M730.5 220.0V359.2M732.5 221.8V361.2M739.5 221.2V362.0M743.5 222.2V359.2M744.5 220.0V362.0M750.5 230.8V350.6M760.5 256.2V326.6M762.5 260.6V321.3M764.5 265.6V316.0M769.5 279.0V302.9M772.5 287.8V294.4M773.5 291.0V291.0"/>
<path stroke="#1692d2" stroke-width="1" fill="none" d="M239.5 235.8V347.8M240.5 233.7V342.1M241.5 242.7V343.4M242.5 232.8V339.3M243.5 237.3V343.2M244.5 234.4V349.7M245.5 233.3V345.2M246.5 235.0V351.3M247.5 232.9V343.5M248.5 237.1V351.2M249.5 236.2V340.9M250.5 220.0V349.3M251.5 221.9V361.0M252.5 220.0V362.0M253.5 220.0V359.9M254.5 221.9V340.4M255.5 222.8V353.2M256.5 220.0V349.6M257.5 226.6V362.0M258.5 221.8V358.7M259.5 223.2V359.3M260.5 228.0V351.4M261.5 232.7V343.8M262.5 220.0V356.0M263.5 220.0V362.0M264.5 222.8V361.3M265.5 222.8V338.7M266.5 220.2V359.9M267.5 236.4V362.0M268.5 224.9V360.9M269.5 222.2V348.9M270.5 220.0V351.5M271.5 223.5V343.9M272.5 234.5V361.4M273.5 221.9V360.4M274.5 224.5V362.0M275.5 222.3V359.3M276.5 220.0V362.0M277.5 235.5V355.0M278.5 220.0V359.5M279.5 225.8V362.0M280.5 222.1V362.0M281.5 220.0V362.0M282.5 222.2V361.7M283.5 233.9V352.7M284.5 221.6V351.3M285.5 225.9V357.5M286.5 220.0V348.7M287.5 236.7V362.0M288.5 221.3V358.1M289.5 220.0V362.0M290.5 233.8V359.5M291.5 220.0V360.4M292.5 231.4V361.6M293.5 220.0V348.2M294.5 220.0V359.6M295.5 220.3V359.5M296.5 245.4V361.7M297.5 223.9V362.0M298.5 235.8V362.0M299.5 229.1V362.0M300.5 231.0V361.7M301.5 220.0V362.0M302.5 221.3V354.0M303.5 227.9V358.1M304.5 224.3V352.5M305.5 220.0V353.4M306.5 220.0V361.4M307.5 220.7V359.5M308.5 220.0V359.7M309.5 220.0V360.6M310.5 273.2V317.2M311.5 220.0V354.5M312.5 220.0V362.0M313.5 222.0V360.4M314.5 224.1V362.0M315.5 238.0V359.5M316.5 230.6V359.6M317.5 220.0V357.6M318.5 223.7V360.3M319.5 225.6V360.0M320.5 227.5V361.2M321.5 222.6V359.8M322.5 236.3V350.4M323.5 221.0V361.1M324.5 234.8V359.1M325.5 221.4V362.0M326.5 220.0V360.5M327.5 222.5V362.0M328.5 222.1V362.0M329.5 231.9V361.3M330.5 220.0V362.0M331.5 224.7V362.0M332.5 236.5V362.0M333.5 225.2V362.0M334.5 221.4V361.2M335.5 225.8V350.9M336.5 221.9V361.0M337.5 223.8V362.0M338.5 220.2V357.9M339.5 221.1V362.0M340.5 221.4V362.0M341.5 220.0V362.0M342.5 220.0V359.5M343.5 222.0V360.1M344.5 223.2V362.0M345.5 220.0V362.0M346.5 221.8V361.7M347.5 220.5V362.0M348.5 220.0V360.7M349.5 221.3V360.6M350.5 220.0V360.8M351.5 220.0V362.0M352.5 220.0V361.9M353.5 222.7V362.0M354.5 220.0V361.2M355.5 220.0V361.1M356.5 220.0V362.0M357.5 221.4V357.5M358.5 220.0V361.7M359.5 236.4V356.9M360.5 221.6V362.0M361.5 221.9V362.0M362.5 220.0V360.8M363.5 220.0V360.0M364.5 220.0V360.9M365.5 220.8V360.5M366.5 220.8V361.1M367.5 220.0V362.0M368.5 220.0V359.3M369.5 221.7V359.2M370.5 220.0V359.5M371.5 220.4V359.5M372.5 223.0V355.5M373.5 220.0V360.0M374.5 220.9V359.8M375.5 220.0V362.0M376.5 225.9V361.6M377.5 221.9V360.4M378.5 221.5V362.0M379.5 222.1V362.0M380.5 220.3V362.0M381.5 221.6V362.0M382.5 220.0V362.0M383.5 220.0V360.1M384.5 220.0V361.3M385.5 220.5V360.0M386.5 220.0V361.0M387.5 220.2V362.0M388.5 222.3V362.0M389.5 222.0V356.7M390.5 226.5V359.6M391.5 241.3V346.0M392.5 227.4V362.0M393.5 220.1V360.3M394.5 221.0V362.0M395.5 220.8V360.1M396.5 221.1V361.5M397.5 220.0V362.0M398.5 220.0V359.7M399.5 220.3V360.4M400.5 220.0V359.4M401.5 221.7V360.3M402.5 220.0V362.0M403.5 222.4V361.0M404.5 221.9V359.7M405.5 221.6V360.6M406.5 220.0V359.8M407.5 220.5V361.5M408.5 223.0V360.1M409.5 220.0V359.9M410.5 220.0V362.0M411.5 223.9V362.0M412.5 220.0V360.9M413.5 220.0V362.0M414.5 221.3V362.0M415.5 222.9V350.9M416.5 222.4V362.0M417.5 220.0V362.0M418.5 220.0V362.0M419.5 220.0V359.0M420.5 221.8V361.5M421.5 220.0V355.4M422.5 221.9V362.0M423.5 220.0V360.0M424.5 220.0V360.6M425.5 222.5V362.0M426.5 220.0V362.0M427.5 220.0V359.7M428.5 220.1V361.4M429.5 220.0V362.0M430.5 220.0V351.1M431.5 220.0V361.9M432.5 220.0V355.2M433.5 220.0V362.0M434.5 222.8V362.0M435.5 220.0V362.0M436.5 221.7V362.0M437.5 220.0V362.0M438.5 220.0V342.6M439.5 221.7V362.0M440.5 220.0V361.7M441.5 220.0V362.0M442.5 220.0V362.0M443.5 226.0V360.5M444.5 220.0V362.0M445.5 222.8V361.9M446.5 226.0V361.2M447.5 222.3V359.2M448.5 222.4V362.0M449.5 222.7V362.0M450.5 227.1V361.0M451.5 220.5V359.1M452.5 221.4V362.0M453.5 220.7V359.5M454.5 233.4V362.0M455.5 248.4V337.7M456.5 220.0V362.0M457.5 224.2V362.0M458.5 221.9V361.7M459.5 220.9V361.3M460.5 220.2V362.0M461.5 220.0V342.7M462.5 220.0V360.8M463.5 220.0V359.2M464.5 221.9V361.2M465.5 220.4V346.4M466.5 222.0V362.0M467.5 222.2V361.6M468.5 222.3V361.0M469.5 220.0V362.0M470.5 220.0V361.3M471.5 220.1V357.7M472.5 222.1V362.0M473.5 220.0V362.0M474.5 222.6V359.8M475.5 220.0V361.4M476.5 220.0V362.0M477.5 220.0V362.0M478.5 220.0V360.1M479.5 220.0V360.1M480.5 223.9V361.0M481.5 220.0V362.0M482.5 220.6V362.0M483.5 221.1V362.0M484.5 220.9V362.0M485.5 221.9V358.6M486.5 221.2V360.0M487.5 220.0V357.0M488.5 220.0V362.0M489.5 243.8V360.4M490.5 220.0V338.5M491.5 220.0V360.5M492.5 221.9V360.9M493.5 220.0V360.6M494.5 220.0V362.0M495.5 222.4V356.2M496.5 226.4V362.0M497.5 221.9V361.9M498.5 221.9V362.0M499.5 221.1V362.0M500.5 220.0V360.2M501.5 222.3V359.5M502.5 222.3V359.4M503.5 220.0V362.0M504.5 220.6V360.0M505.5 221.5V362.0M506.5 220.0V362.0M507.5 222.8V362.0M508.5 230.0V359.4M509.5 227.0V359.2M510.5 222.3V362.0M511.5 221.7V362.0M512.5 220.0V361.2M513.5 222.0V360.9M514.5 220.0V358.3M515.5 222.2V360.6M516.5 221.1V360.1M517.5 220.0V362.0M518.5 221.7V362.0M519.5 220.0V362.0M520.5 225.9V361.6M521.5 223.9V361.3M522.5 220.0V359.4M523.5 220.1V362.0M524.5 223.8V359.2M525.5 220.0V361.2M526.5 220.0V362.0M527.5 220.2V359.2M528.5 239.3V360.6M529.5 220.0V361.1M530.5 220.2V361.3M531.5 220.0V361.0M532.5 220.0V360.4M533.5 224.6V362.0M534.5 220.0V361.7M535.5 222.7V362.0M536.5 244.8V339.2M537.5 243.7V359.6M538.5 222.7V362.0M539.5 222.6V362.0M540.5 220.0V361.4M541.5 220.2V361.5M542.5 220.6V362.0M543.5 220.0V361.2M544.5 220.9V361.9M545.5 220.0V361.0M546.5 220.2V360.4M547.5 221.7V362.0M548.5 221.6V361.5M549.5 224.6V361.7M550.5 221.3V359.7M551.5 222.6V359.3M552.5 220.5V359.6M553.5 220.0V361.6M554.5 220.0V360.3M555.5 220.0V362.0M556.5 222.0V362.0M557.5 220.0V359.4M558.5 220.0V359.9M559.5 222.4V362.0M560.5 220.0V360.8M561.5 222.5V358.4M562.5 220.0V362.0M563.5 220.0V362.0M564.5 220.9V361.6M565.5 220.0V362.0M566.5 220.6V359.9M567.5 220.0V360.2M568.5 227.3V362.0M569.5 220.0V362.0M570.5 222.7V360.5M571.5 222.7V362.0M572.5 220.0V361.7M573.5 222.4V360.8M574.5 221.0V337.9M575.5 226.0V362.0M576.5 222.3V341.8M577.5 221.0V362.0M578.5 220.0V359.9M579.5 220.2V362.0M580.5 222.2V361.1M581.5 276.8V317.6M582.5 220.0V362.0M583.5 220.0V361.6M584.5 221.2V362.0M585.5 220.5V354.8M586.5 222.1V360.9M587.5 220.7V362.0M588.5 220.0V354.9M589.5 225.9V362.0M590.5 221.5V359.8M591.5 222.8V362.0M592.5 221.8V362.0M593.5 221.5V362.0M594.5 236.9V362.0M595.5 220.1V361.1M596.5 220.2V361.2M597.5 220.8V357.9M598.5 220.0V362.0M599.5 223.0V360.2M600.5 220.0V362.0M601.5 220.0V362.0M602.5 220.0V362.0M603.5 220.0V357.0M604.5 262.6V323.0M605.5 221.5V362.0M606.5 220.0V362.0M607.5 220.0V357.4M608.5 222.1V362.0M609.5 222.1V360.6M610.5 227.0V362.0M611.5 220.0V362.0M612.5 220.0V362.0M613.5 233.8V361.7M614.5 221.6V362.0M615.5 220.0V362.0M616.5 224.3V360.8M617.5 225.4V362.0M618.5 220.0V359.5M619.5 221.9V362.0M620.5 222.2V362.0M621.5 220.0V360.4M622.5 221.4V362.0M623.5 222.5V360.0M624.5 222.0V362.0M625.5 220.3V359.3M626.5 220.0V359.9M627.5 220.6V359.9M628.5 229.1V361.1M629.5 222.0V361.6M630.5 241.3V342.7M631.5 220.0V362.0M632.5 221.2V359.2M633.5 222.6V361.2M634.5 220.0V360.6M635.5 222.6V359.9M636.5 222.4V360.7M637.5 220.0V361.4M638.5 221.7V360.2M639.5 220.0V362.0M640.5 220.1V361.9M641.5 221.6V361.2M642.5 220.3V359.9M643.5 222.5V362.0M644.5 221.4V362.0M645.5 221.3V359.6M646.5 220.0V359.7M647.5 221.0V360.2M648.5 227.8V362.0M649.5 222.1V360.5M650.5 221.1V360.3M651.5 220.0V362.0M652.5 226.0V360.9M653.5 220.0V362.0M654.5 222.2V359.7M655.5 222.0V356.7M656.5 220.0V362.0M657.5 220.0V361.8M658.5 222.1V362.0M659.5 220.6V360.9M660.5 222.6V362.0M661.5 221.6V360.8M662.5 221.8V362.0M663.5 220.5V360.9M664.5 220.0V360.2M665.5 220.0V362.0M666.5 220.0V361.3M667.5 220.3V357.3M668.5 222.6V356.0M669.5 220.1V360.8M670.5 225.1V362.0M671.5 222.2V359.8M672.5 220.0V362.0M673.5 222.6V362.0M674.5 224.1V358.4M675.5 269.7V316.0M676.5 227.8V357.9M677.5 220.0V359.5M678.5 220.0V355.3M679.5 221.3V361.6M680.5 221.2V362.0M681.5 242.2V361.0M682.5 225.0V359.2M683.5 220.5V362.0M684.5 220.5V360.9M685.5 222.2V361.3M686.5 226.3V362.0M687.5 220.1V359.8M688.5 222.4V361.0M689.5 220.8V362.0M690.5 220.4V361.8M691.5 220.7V358.8M692.5 220.0V359.9M693.5 221.7V360.9M694.5 220.0V360.4M695.5 222.4V362.0M696.5 222.6V354.7M697.5 226.8V360.3M698.5 222.8V361.1M699.5 220.0V360.8M700.5 221.3V362.0M701.5 220.0V360.4M702.5 221.0V362.0M703.5 221.5V362.0M704.5 221.2V362.0M705.5 222.2V362.0M706.5 223.6V361.6M707.5 221.5V362.0M708.5 222.3V361.7M709.5 222.0V359.2M710.5 220.7V359.4M711.5 220.8V362.0M712.5 222.7V362.0M713.5 220.0V362.0M714.5 221.0V359.4M715.5 221.4V361.0M716.5 220.0V362.0M717.5 222.7V362.0M718.5 220.5V362.0M719.5 220.2V362.0M720.5 220.0V344.6M721.5 221.0V362.0M722.5 222.3V360.3M723.5 222.6V362.0M724.5 221.4V362.0M725.5 220.0V361.9M726.5 220.0V359.9M727.5 220.0V360.4M728.5 221.9V361.4M729.5 220.0V362.0M730.5 220.0V356.5M731.5 221.4V362.0M732.5 225.8V348.2M733.5 220.0V359.5M734.5 220.0V362.0M735.5 220.0V362.0M736.5 220.0V360.3M737.5 221.9V359.8M738.5 220.5V361.9M739.5 225.6V359.0M740.5 222.6V362.0M741.5 222.7V360.1M742.5 220.0V362.0M743.5 238.2V356.0M744.5 223.2V362.0M745.5 221.3V362.0M746.5 223.3V360.8M747.5 224.7V357.8M748.5 227.2V355.8M749.5 228.4V353.6M750.5 230.8V349.4M751.5 233.2V348.8M752.5 235.6V345.9M753.5 238.0V342.0M754.5 240.5V341.5M755.5 242.9V339.1M756.5 246.5V336.0M757.5 247.9V332.6M758.5 250.3V330.9M759.5 253.2V328.2M760.5 256.2V323.1M761.5 258.1V323.9M762.5 263.2V321.2M763.5 263.0V319.0M764.5 265.9V316.0M765.5 268.7V313.4M766.5 270.8V311.2M767.5 273.9V308.5M768.5 276.2V305.8M769.5 282.7V302.9M770.5 281.8V300.2M771.5 284.8V297.2M772.5 287.9V293.7"/>

<rect x="188" y="210.5" width="588" height="3.5" fill="#000"/>
<rect x="188" y="216.5" width="588" height="3.5" fill="#000"/>
<rect x="188" y="64" width="588" height="3.5" fill="#000"/>
<rect x="188" y="362.5" width="588" height="5.5" fill="#000"/>
<rect x="188" y="214.3" width="588" height="1.7" fill="#9a9a9a"/>
<rect x="188" y="367.5" width="588" height="5" fill="#4b4b4b"/>
<rect x="188" y="372" width="612" height="20" fill="#7f7f7f"/>
<rect x="776" y="52" width="24" height="321" fill="#7f7f7f"/>
<rect x="776" y="52" width="1" height="320" fill="#9c9c9c"/>
<rect x="777" y="68.0" width="4" height="1" fill="#b5b5b5"/>
<rect x="777" y="210.0" width="4" height="1" fill="#b5b5b5"/>
<rect x="777" y="83.0" width="4" height="1" fill="#b5b5b5"/>
<rect x="777" y="195.0" width="4" height="1" fill="#b5b5b5"/>
<rect x="777" y="94.0" width="4" height="1" fill="#b5b5b5"/>
<rect x="777" y="184.0" width="4" height="1" fill="#b5b5b5"/>
<rect x="777" y="103.0" width="4" height="1" fill="#b5b5b5"/>
<rect x="777" y="175.0" width="4" height="1" fill="#b5b5b5"/>
<rect x="777" y="117.0" width="4" height="1" fill="#b5b5b5"/>
<rect x="777" y="161.0" width="4" height="1" fill="#b5b5b5"/>
<rect x="777" y="128.0" width="4" height="1" fill="#b5b5b5"/>
<rect x="777" y="150.0" width="4" height="1" fill="#b5b5b5"/>
<rect x="777" y="139" width="4" height="1" fill="#b5b5b5"/>
<rect x="777" y="220.0" width="4" height="1" fill="#b5b5b5"/>
<rect x="777" y="362.0" width="4" height="1" fill="#b5b5b5"/>
<rect x="777" y="235.0" width="4" height="1" fill="#b5b5b5"/>
<rect x="777" y="347.0" width="4" height="1" fill="#b5b5b5"/>
<rect x="777" y="246.0" width="4" height="1" fill="#b5b5b5"/>
<rect x="777" y="336.0" width="4" height="1" fill="#b5b5b5"/>
<rect x="777" y="255.0" width="4" height="1" fill="#b5b5b5"/>
<rect x="777" y="327.0" width="4" height="1" fill="#b5b5b5"/>
<rect x="777" y="269.0" width="4" height="1" fill="#b5b5b5"/>
<rect x="777" y="313.0" width="4" height="1" fill="#b5b5b5"/>
<rect x="777" y="280.0" width="4" height="1" fill="#b5b5b5"/>
<rect x="777" y="302.0" width="4" height="1" fill="#b5b5b5"/>
<rect x="777" y="291" width="4" height="1" fill="#b5b5b5"/>
<g font-size="6" fill="#d0d0d0" text-anchor="middle"><text x="788.2" y="70.2">0</text><text x="788.2" y="212.2">0</text><text x="788.2" y="84.8">-2</text><text x="788.2" y="197.6">-2</text><text x="788.2" y="96.4">-4</text><text x="788.2" y="186.0">-4</text><text x="788.2" y="105.6">-6</text><text x="788.2" y="176.8">-6</text><text x="788.2" y="118.7">-10</text><text x="788.2" y="163.7">-10</text><text x="788.2" y="129.9">-16</text><text x="788.2" y="152.5">-16</text><text x="788.2" y="141.2">-oo</text><text x="788.2" y="222.2">0</text><text x="788.2" y="364.2">0</text><text x="788.2" y="236.8">-2</text><text x="788.2" y="349.6">-2</text><text x="788.2" y="248.4">-4</text><text x="788.2" y="338.0">-4</text><text x="788.2" y="257.6">-6</text><text x="788.2" y="328.8">-6</text><text x="788.2" y="270.7">-10</text><text x="788.2" y="315.7">-10</text><text x="788.2" y="281.9">-16</text><text x="788.2" y="304.5">-16</text><text x="788.2" y="293.2">-oo</text></g>
<g fill="#b0b0b0"><rect x="188.0" y="372.8" width="0.8" height="4.2"/><rect x="191.2" y="372.8" width="0.8" height="2.2"/><rect x="194.3" y="372.8" width="0.8" height="2.2"/><rect x="197.5" y="372.8" width="0.8" height="2.2"/><rect x="200.6" y="372.8" width="0.8" height="2.2"/><rect x="203.8" y="372.8" width="0.8" height="4.2"/><rect x="207.0" y="372.8" width="0.8" height="2.2"/><rect x="210.1" y="372.8" width="0.8" height="2.2"/><rect x="213.3" y="372.8" width="0.8" height="2.2"/><rect x="216.5" y="372.8" width="0.8" height="2.2"/><rect x="219.6" y="372.8" width="0.8" height="4.2"/><rect x="222.8" y="372.8" width="0.8" height="2.2"/><rect x="225.9" y="372.8" width="0.8" height="2.2"/><rect x="229.1" y="372.8" width="0.8" height="2.2"/><rect x="232.3" y="372.8" width="0.8" height="2.2"/><rect x="235.4" y="372.8" width="0.8" height="4.2"/><rect x="238.6" y="372.8" width="0.8" height="2.2"/><rect x="241.8" y="372.8" width="0.8" height="2.2"/><rect x="244.9" y="372.8" width="0.8" height="2.2"/><rect x="248.1" y="372.8" width="0.8" height="2.2"/><rect x="251.2" y="372.8" width="0.8" height="4.2"/><rect x="254.4" y="372.8" width="0.8" height="2.2"/><rect x="257.6" y="372.8" width="0.8" height="2.2"/><rect x="260.7" y="372.8" width="0.8" height="2.2"/><rect x="263.9" y="372.8" width="0.8" height="2.2"/><rect x="267.1" y="372.8" width="0.8" height="4.2"/><rect x="270.2" y="372.8" width="0.8" height="2.2"/><rect x="273.4" y="372.8" width="0.8" height="2.2"/><rect x="276.5" y="372.8" width="0.8" height="2.2"/><rect x="279.7" y="372.8" width="0.8" height="2.2"/><rect x="282.9" y="372.8" width="0.8" height="4.2"/><rect x="286.0" y="372.8" width="0.8" height="2.2"/><rect x="289.2" y="372.8" width="0.8" height="2.2"/><rect x="292.4" y="372.8" width="0.8" height="2.2"/><rect x="295.5" y="372.8" width="0.8" height="2.2"/><rect x="298.7" y="372.8" width="0.8" height="4.2"/><rect x="301.8" y="372.8" width="0.8" height="2.2"/><rect x="305.0" y="372.8" width="0.8" height="2.2"/><rect x="308.2" y="372.8" width="0.8" height="2.2"/><rect x="311.3" y="372.8" width="0.8" height="2.2"/><rect x="314.5" y="372.8" width="0.8" height="4.2"/><rect x="317.7" y="372.8" width="0.8" height="2.2"/><rect x="320.8" y="372.8" width="0.8" height="2.2"/><rect x="324.0" y="372.8" width="0.8" height="2.2"/><rect x="327.1" y="372.8" width="0.8" height="2.2"/><rect x="330.3" y="372.8" width="0.8" height="4.2"/><rect x="333.5" y="372.8" width="0.8" height="2.2"/><rect x="336.6" y="372.8" width="0.8" height="2.2"/><rect x="339.8" y="372.8" width="0.8" height="2.2"/><rect x="343.0" y="372.8" width="0.8" height="2.2"/><rect x="346.1" y="372.8" width="0.8" height="4.2"/><rect x="349.3" y="372.8" width="0.8" height="2.2"/><rect x="352.4" y="372.8" width="0.8" height="2.2"/><rect x="355.6" y="372.8" width="0.8" height="2.2"/><rect x="358.8" y="372.8" width="0.8" height="2.2"/><rect x="361.9" y="372.8" width="0.8" height="4.2"/><rect x="365.1" y="372.8" width="0.8" height="2.2"/><rect x="368.3" y="372.8" width="0.8" height="2.2"/><rect x="371.4" y="372.8" width="0.8" height="2.2"/><rect x="374.6" y="372.8" width="0.8" height="2.2"/><rect x="377.7" y="372.8" width="0.8" height="4.2"/><rect x="380.9" y="372.8" width="0.8" height="2.2"/><rect x="384.1" y="372.8" width="0.8" height="2.2"/><rect x="387.2" y="372.8" width="0.8" height="2.2"/><rect x="390.4" y="372.8" width="0.8" height="2.2"/><rect x="393.6" y="372.8" width="0.8" height="4.2"/><rect x="396.7" y="372.8" width="0.8" height="2.2"/><rect x="399.9" y="372.8" width="0.8" height="2.2"/><rect x="403.0" y="372.8" width="0.8" height="2.2"/><rect x="406.2" y="372.8" width="0.8" height="2.2"/><rect x="409.4" y="372.8" width="0.8" height="4.2"/><rect x="412.5" y="372.8" width="0.8" height="2.2"/><rect x="415.7" y="372.8" width="0.8" height="2.2"/><rect x="418.8" y="372.8" width="0.8" height="2.2"/><rect x="422.0" y="372.8" width="0.8" height="2.2"/><rect x="425.2" y="372.8" width="0.8" height="4.2"/><rect x="428.3" y="372.8" width="0.8" height="2.2"/><rect x="431.5" y="372.8" width="0.8" height="2.2"/><rect x="434.7" y="372.8" width="0.8" height="2.2"/><rect x="437.8" y="372.8" width="0.8" height="2.2"/><rect x="441.0" y="372.8" width="0.8" height="4.2"/><rect x="444.1" y="372.8" width="0.8" height="2.2"/><rect x="447.3" y="372.8" width="0.8" height="2.2"/><rect x="450.5" y="372.8" width="0.8" height="2.2"/><rect x="453.6" y="372.8" width="0.8" height="2.2"/><rect x="456.8" y="372.8" width="0.8" height="4.2"/><rect x="460.0" y="372.8" width="0.8" height="2.2"/><rect x="463.1" y="372.8" width="0.8" height="2.2"/><rect x="466.3" y="372.8" width="0.8" height="2.2"/><rect x="469.4" y="372.8" width="0.8" height="2.2"/><rect x="472.6" y="372.8" width="0.8" height="4.2"/><rect x="475.8" y="372.8" width="0.8" height="2.2"/><rect x="478.9" y="372.8" width="0.8" height="2.2"/><rect x="482.1" y="372.8" width="0.8" height="2.2"/><rect x="485.3" y="372.8" width="0.8" height="2.2"/><rect x="488.4" y="372.8" width="0.8" height="4.2"/><rect x="491.6" y="372.8" width="0.8" height="2.2"/><rect x="494.7" y="372.8" width="0.8" height="2.2"/><rect x="497.9" y="372.8" width="0.8" height="2.2"/><rect x="501.1" y="372.8" width="0.8" height="2.2"/><rect x="504.2" y="372.8" width="0.8" height="4.2"/><rect x="507.4" y="372.8" width="0.8" height="2.2"/><rect x="510.6" y="372.8" width="0.8" height="2.2"/><rect x="513.7" y="372.8" width="0.8" height="2.2"/><rect x="516.9" y="372.8" width="0.8" height="2.2"/><rect x="520.0" y="372.8" width="0.8" height="4.2"/><rect x="523.2" y="372.8" width="0.8" height="2.2"/><rect x="526.4" y="372.8" width="0.8" height="2.2"/><rect x="529.5" y="372.8" width="0.8" height="2.2"/><rect x="532.7" y="372.8" width="0.8" height="2.2"/><rect x="535.9" y="372.8" width="0.8" height="4.2"/><rect x="539.0" y="372.8" width="0.8" height="2.2"/><rect x="542.2" y="372.8" width="0.8" height="2.2"/><rect x="545.3" y="372.8" width="0.8" height="2.2"/><rect x="548.5" y="372.8" width="0.8" height="2.2"/><rect x="551.7" y="372.8" width="0.8" height="4.2"/><rect x="554.8" y="372.8" width="0.8" height="2.2"/><rect x="558.0" y="372.8" width="0.8" height="2.2"/><rect x="561.2" y="372.8" width="0.8" height="2.2"/><rect x="564.3" y="372.8" width="0.8" height="2.2"/><rect x="567.5" y="372.8" width="0.8" height="4.2"/><rect x="570.6" y="372.8" width="0.8" height="2.2"/><rect x="573.8" y="372.8" width="0.8" height="2.2"/><rect x="577.0" y="372.8" width="0.8" height="2.2"/><rect x="580.1" y="372.8" width="0.8" height="2.2"/><rect x="583.3" y="372.8" width="0.8" height="4.2"/><rect x="586.5" y="372.8" width="0.8" height="2.2"/><rect x="589.6" y="372.8" width="0.8" height="2.2"/><rect x="592.8" y="372.8" width="0.8" height="2.2"/><rect x="595.9" y="372.8" width="0.8" height="2.2"/><rect x="599.1" y="372.8" width="0.8" height="4.2"/><rect x="602.3" y="372.8" width="0.8" height="2.2"/><rect x="605.4" y="372.8" width="0.8" height="2.2"/><rect x="608.6" y="372.8" width="0.8" height="2.2"/><rect x="611.8" y="372.8" width="0.8" height="2.2"/><rect x="614.9" y="372.8" width="0.8" height="4.2"/><rect x="618.1" y="372.8" width="0.8" height="2.2"/><rect x="621.2" y="372.8" width="0.8" height="2.2"/><rect x="624.4" y="372.8" width="0.8" height="2.2"/><rect x="627.6" y="372.8" width="0.8" height="2.2"/><rect x="630.7" y="372.8" width="0.8" height="4.2"/><rect x="633.9" y="372.8" width="0.8" height="2.2"/><rect x="637.1" y="372.8" width="0.8" height="2.2"/><rect x="640.2" y="372.8" width="0.8" height="2.2"/><rect x="643.4" y="372.8" width="0.8" height="2.2"/><rect x="646.5" y="372.8" width="0.8" height="4.2"/><rect x="649.7" y="372.8" width="0.8" height="2.2"/><rect x="652.9" y="372.8" width="0.8" height="2.2"/><rect x="656.0" y="372.8" width="0.8" height="2.2"/><rect x="659.2" y="372.8" width="0.8" height="2.2"/><rect x="662.3" y="372.8" width="0.8" height="4.2"/><rect x="665.5" y="372.8" width="0.8" height="2.2"/><rect x="668.7" y="372.8" width="0.8" height="2.2"/><rect x="671.8" y="372.8" width="0.8" height="2.2"/><rect x="675.0" y="372.8" width="0.8" height="2.2"/><rect x="678.2" y="372.8" width="0.8" height="4.2"/><rect x="681.3" y="372.8" width="0.8" height="2.2"/><rect x="684.5" y="372.8" width="0.8" height="2.2"/><rect x="687.6" y="372.8" width="0.8" height="2.2"/><rect x="690.8" y="372.8" width="0.8" height="2.2"/><rect x="694.0" y="372.8" width="0.8" height="4.2"/><rect x="697.1" y="372.8" width="0.8" height="2.2"/><rect x="700.3" y="372.8" width="0.8" height="2.2"/><rect x="703.5" y="372.8" width="0.8" height="2.2"/><rect x="706.6" y="372.8" width="0.8" height="2.2"/><rect x="709.8" y="372.8" width="0.8" height="4.2"/><rect x="712.9" y="372.8" width="0.8" height="2.2"/><rect x="716.1" y="372.8" width="0.8" height="2.2"/><rect x="719.3" y="372.8" width="0.8" height="2.2"/><rect x="722.4" y="372.8" width="0.8" height="2.2"/><rect x="725.6" y="372.8" width="0.8" height="4.2"/><rect x="728.8" y="372.8" width="0.8" height="2.2"/><rect x="731.9" y="372.8" width="0.8" height="2.2"/><rect x="735.1" y="372.8" width="0.8" height="2.2"/><rect x="738.2" y="372.8" width="0.8" height="2.2"/><rect x="741.4" y="372.8" width="0.8" height="4.2"/><rect x="744.6" y="372.8" width="0.8" height="2.2"/><rect x="747.7" y="372.8" width="0.8" height="2.2"/><rect x="750.9" y="372.8" width="0.8" height="2.2"/><rect x="754.1" y="372.8" width="0.8" height="2.2"/><rect x="757.2" y="372.8" width="0.8" height="4.2"/><rect x="760.4" y="372.8" width="0.8" height="2.2"/><rect x="763.5" y="372.8" width="0.8" height="2.2"/><rect x="766.7" y="372.8" width="0.8" height="2.2"/><rect x="769.9" y="372.8" width="0.8" height="2.2"/><rect x="773.0" y="372.8" width="0.8" height="4.2"/></g>
<g font-size="6" fill="#d0d0d0" text-anchor="middle"><text x="203.8" y="384.7">0:05</text><text x="219.6" y="384.7">0:10</text><text x="235.4" y="384.7">0:15</text><text x="251.2" y="384.7">0:20</text><text x="267.1" y="384.7">0:25</text><text x="282.9" y="384.7">0:30</text><text x="298.7" y="384.7">0:35</text><text x="314.5" y="384.7">0:40</text><text x="330.3" y="384.7">0:45</text><text x="346.1" y="384.7">0:50</text><text x="361.9" y="384.7">0:55</text><text x="377.7" y="384.7">1:00</text><text x="393.6" y="384.7">1:05</text><text x="409.4" y="384.7">1:10</text><text x="425.2" y="384.7">1:15</text><text x="441.0" y="384.7">1:20</text><text x="456.8" y="384.7">1:25</text><text x="472.6" y="384.7">1:30</text><text x="488.4" y="384.7">1:35</text><text x="504.2" y="384.7">1:40</text><text x="520.0" y="384.7">1:45</text><text x="535.9" y="384.7">1:50</text><text x="551.7" y="384.7">1:55</text><text x="567.5" y="384.7">2:00</text><text x="583.3" y="384.7">2:05</text><text x="599.1" y="384.7">2:10</text><text x="614.9" y="384.7">2:15</text><text x="630.7" y="384.7">2:20</text><text x="646.5" y="384.7">2:25</text><text x="662.3" y="384.7">2:30</text><text x="678.2" y="384.7">2:35</text><text x="694.0" y="384.7">2:40</text><text x="709.8" y="384.7">2:45</text><text x="725.6" y="384.7">2:50</text><text x="741.4" y="384.7">2:55</text><text x="757.2" y="384.7">3:00</text></g>
<line x1="227.5" x2="227.5" y1="64" y2="368" stroke="#d8d8d8" stroke-width="1.2" stroke-dasharray="1.6,1.6"/>
<rect x="226.8" y="52" width="1.4" height="6" fill="#7cc6ee"/>
<polygon points="224.1,58.3 230.9,58.3 227.5,63.5" fill="#fff"/>
<polygon points="224.1,372 230.9,372 227.5,366.8" fill="#fff"/>
</svg>
<div id="ctl" class="abs"></div>

<div class="abs btn" style="left:187.500px;width:23.500px;border-radius:3px 0 0 0"></div>
<div class="abs btn" style="left:210.500px;width:17.500px;border-radius:0 3px 0 0;border-left:1px solid #c9c9c9"></div>
<div class="abs btn" style="left:234.200px;width:17px;border-radius:3px 0 0 0"></div>
<div class="abs btn" style="left:250.400px;width:18px;border-left:1px solid #c9c9c9"></div>
<div class="abs btn" style="left:267.800px;width:17.700px;border-radius:0 3px 0 0;border-left:1px solid #c9c9c9"></div>
<svg class="abs" style="left:194px;top:403px" width="11" height="11" viewBox="0 0 11 11"><path d="M.5.500L10.500 5.500.5 10.500z" fill="#2a2a2a"/></svg>
<div class="abs" style="left:216px;top:405.500px;width:6.500px;height:6.500px;background:#2a2a2a"></div>
<svg class="abs" style="left:237px;top:403.100px" width="11" height="11" viewBox="0 0 11 11"><circle cx="4" cy="4" r="3" fill="#e9e9e9" stroke="#333" stroke-width="1.400"/><path d="M6.200 6.200L8.900 8.900" stroke="#222" stroke-width="2"/><path d="M2.500 4h3M4 2.500v3" stroke="#333" stroke-width=".9"/></svg>
<svg class="abs" style="left:254px;top:403.100px" width="11" height="11" viewBox="0 0 11 11"><circle cx="4" cy="4" r="3" fill="#e9e9e9" stroke="#333" stroke-width="1.400"/><path d="M6.200 6.200L8.900 8.900" stroke="#222" stroke-width="2"/><path d="M2.500 4h3" stroke="#333" stroke-width=".9"/></svg>
<svg class="abs" style="left:271.500px;top:403.100px" width="11" height="11" viewBox="0 0 11 11"><circle cx="4" cy="4" r="3" fill="#f4f4f4" stroke="#333" stroke-width="1.400"/><path d="M6.200 6.200L8.900 8.900" stroke="#222" stroke-width="2"/></svg>

<div class="abs" style="left:0;top:415.200px;width:184px;height:2px;background:linear-gradient(90deg,#c6c6c6 99%,#e6e6e6);z-index:5"></div>
<div id="t1" class="abs">00:00:12.487</div><div id="tsep" class="abs"></div><div id="t2" class="abs">00:03:05.939</div>
</div></body></html>
